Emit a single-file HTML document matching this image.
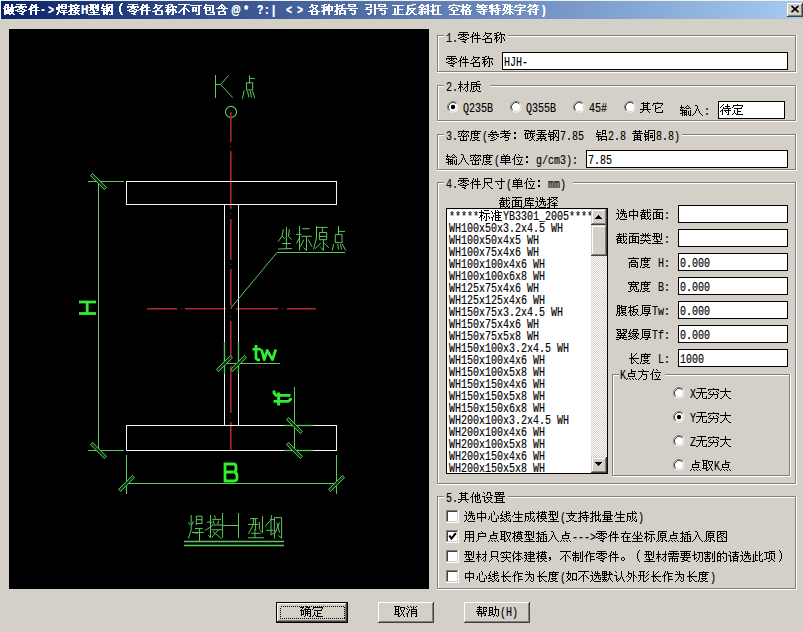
<!DOCTYPE html>
<html><head><meta charset="utf-8"><style>
html,body{margin:0;padding:0;}
body{width:803px;height:632px;overflow:hidden;position:relative;background:#d4d0c8;font-family:"Liberation Sans",sans-serif;font-size:12px;color:#000;}
#tb{position:absolute;left:1px;top:1px;width:802px;height:18px;background:linear-gradient(to right,#0a246a 0%,#a6caf0 100%);}
#topline{position:absolute;left:0;top:0;width:803px;height:1px;background:#eef0f4;}
#leftline{position:absolute;left:0;top:0;width:1px;height:20px;background:#eef0f4;}
.title{position:absolute;top:4px;height:13px;line-height:13px;color:#fff;font-weight:bold;font-size:12px;white-space:nowrap;text-shadow:0.6px 0 0 #fff;}
.ct{display:inline-block;width:12.75px;position:relative;color:transparent;text-shadow:none;}
.ct .g{fill:#fff;}
.ta{display:inline-block;width:7px;transform:scaleX(0.8);transform-origin:0 0;}
#cad{position:absolute;left:9px;top:29px;width:420px;height:560px;background:#000;}
svg{position:absolute;left:0;top:0;}
.t{position:absolute;white-space:nowrap;line-height:12px;height:12px;}
.c{display:inline-block;width:12px;height:12px;line-height:12px;vertical-align:top;position:relative;top:1px;color:transparent;}
.g{position:absolute;left:0;top:-2px;fill:#000;overflow:visible;}
.ct .g{top:-2px;}
.a{display:inline-block;height:12px;line-height:12px;vertical-align:top;overflow:visible;white-space:nowrap;}
.s{display:inline-block;font-family:"Liberation Mono",monospace;font-size:12px;line-height:12px;transform:scaleX(0.8333);transform-origin:0 0;position:relative;top:1px;-webkit-text-stroke:0.15px #000;}
#list{position:absolute;left:447px;top:209px;width:144px;height:264px;overflow:hidden;}
</style></head><body>
<svg width="0" height="0" style="position:absolute;left:0;top:0"><defs><path id="g3002" d="M2 8h2v1h-2zM1 9h1v2h-1zM4 9h1v2h-1zM2 11h2v1h-2z"/><path id="g4e0d" d="M0 2h11v1h-11zM6 3h1v2h-1zM5 5h1v1h-1zM4 6h2v1h-2zM7 6h1v1h-1zM3 7h1v1h-1zM8 7h1v1h-1zM2 8h1v1h-1zM9 8h1v1h-1zM1 9h1v1h-1zM10 9h1v1h-1zM0 10h1v1h-1zM5 7h1v6h-1z"/><path id="g4e2d" d="M5 2h1v2h-1zM1 4h9v1h-9zM1 5h1v3h-1zM5 5h1v3h-1zM9 5h1v3h-1zM1 8h9v1h-9zM1 9h1v1h-1zM9 9h1v1h-1zM5 9h1v4h-1z"/><path id="g4e3a" d="M2 2h1v1h-1zM3 3h1v1h-1zM5 2h1v3h-1zM1 5h9v1h-9zM5 6h1v1h-1zM5 7h2v1h-2zM4 8h1v2h-1zM7 8h1v2h-1zM3 10h1v1h-1zM2 11h1v1h-1zM6 11h1v1h-1zM9 6h1v6h-1zM1 12h1v1h-1zM7 12h2v1h-2z"/><path id="g4ed6" d="M3 2h1v2h-1zM7 2h1v3h-1zM9 4h1v1h-1zM2 4h1v2h-1zM5 4h1v2h-1zM7 5h3v1h-3zM1 6h2v1h-2zM4 6h4v1h-4zM0 7h1v1h-1zM7 7h1v2h-1zM9 6h1v3h-1zM7 9h2v1h-2zM7 10h1v1h-1zM5 7h1v5h-1zM10 10h1v2h-1zM2 7h1v6h-1zM6 12h5v1h-5z"/><path id="g4ef6" d="M3 2h1v2h-1zM5 3h1v2h-1zM7 2h1v3h-1zM2 4h1v2h-1zM4 5h6v1h-6zM1 6h3v1h-3zM0 7h1v1h-1zM7 6h1v2h-1zM4 8h7v1h-7zM2 7h1v6h-1zM7 9h1v4h-1z"/><path id="g4f4d" d="M6 2h1v1h-1zM3 2h1v2h-1zM7 3h1v1h-1zM2 4h1v2h-1zM4 5h7v1h-7zM1 6h2v1h-2zM0 7h1v1h-1zM5 7h1v1h-1zM9 7h1v2h-1zM6 8h1v2h-1zM8 9h1v2h-1zM7 11h1v1h-1zM2 7h1v6h-1zM4 12h7v1h-7z"/><path id="g4f53" d="M2 2h1v2h-1zM6 2h1v2h-1zM3 4h7v1h-7zM1 4h1v2h-1zM6 5h1v1h-1zM0 6h2v1h-2zM5 6h3v1h-3zM4 7h1v1h-1zM8 7h1v1h-1zM1 7h1v2h-1zM3 8h1v1h-1zM9 8h1v1h-1zM1 9h2v1h-2zM6 7h1v3h-1zM10 9h1v1h-1zM4 10h5v1h-5zM1 10h1v3h-1zM6 11h1v2h-1z"/><path id="g4f5c" d="M3 2h1v2h-1zM5 2h1v2h-1zM5 4h6v1h-6zM2 4h1v2h-1zM4 5h1v1h-1zM1 6h3v1h-3zM6 5h1v2h-1zM0 7h1v1h-1zM6 7h4v1h-4zM6 8h1v2h-1zM6 10h5v1h-5zM2 7h1v6h-1zM6 11h1v2h-1z"/><path id="g5165" d="M3 2h2v1h-2zM5 3h1v3h-1zM4 6h1v2h-1zM6 6h1v2h-1zM3 8h1v2h-1zM7 8h1v2h-1zM2 10h1v1h-1zM8 10h1v1h-1zM1 11h1v1h-1zM9 11h1v1h-1zM0 12h1v1h-1zM10 12h1v1h-1z"/><path id="g5176" d="M3 2h1v1h-1zM7 2h1v1h-1zM1 3h9v1h-9zM3 4h1v1h-1zM7 4h1v1h-1zM3 5h5v1h-5zM3 6h1v1h-1zM7 6h1v1h-1zM3 7h5v1h-5zM3 8h1v1h-1zM7 8h1v1h-1zM0 9h11v1h-11zM3 10h1v1h-1zM7 10h1v1h-1zM2 11h1v1h-1zM8 11h1v1h-1zM0 12h2v1h-2zM9 12h1v1h-1z"/><path id="g51c6" d="M6 2h1v1h-1zM0 3h1v1h-1zM4 2h1v2h-1zM7 3h1v1h-1zM4 4h7v1h-7zM1 4h1v2h-1zM3 5h2v1h-2zM4 6h1v1h-1zM7 5h1v2h-1zM4 7h6v1h-6zM2 7h1v2h-1zM4 8h1v1h-1zM7 8h1v1h-1zM0 9h2v1h-2zM4 9h6v1h-6zM4 10h1v2h-1zM7 10h1v2h-1zM1 10h1v3h-1zM4 12h7v1h-7z"/><path id="g5207" d="M5 3h6v1h-6zM2 2h1v3h-1zM2 5h3v1h-3zM0 6h3v1h-3zM2 7h1v2h-1zM4 8h1v1h-1zM7 4h1v5h-1zM2 9h2v1h-2zM2 10h1v1h-1zM6 9h1v2h-1zM5 11h1v1h-1zM10 4h1v8h-1zM4 12h1v1h-1zM8 12h2v1h-2z"/><path id="g5236" d="M1 3h1v1h-1zM3 2h1v2h-1zM1 4h6v1h-6zM0 5h1v1h-1zM3 5h1v1h-1zM0 6h7v1h-7zM3 7h1v1h-1zM1 8h6v1h-6zM8 3h1v7h-1zM6 9h1v2h-1zM1 9h1v3h-1zM5 11h2v1h-2zM10 2h1v10h-1zM3 9h1v4h-1zM8 12h3v1h-3z"/><path id="g5272" d="M3 2h1v1h-1zM0 3h7v1h-7zM0 4h1v1h-1zM3 4h1v1h-1zM6 4h1v1h-1zM1 5h5v1h-5zM3 6h1v1h-1zM1 7h5v1h-5zM3 8h1v1h-1zM0 9h7v1h-7zM8 4h1v6h-1zM1 10h1v2h-1zM5 10h1v2h-1zM10 2h1v10h-1zM1 12h5v1h-5zM8 12h3v1h-3z"/><path id="g52a9" d="M1 3h4v1h-4zM7 2h1v3h-1zM1 4h1v2h-1zM4 4h1v2h-1zM6 5h5v1h-5zM1 6h4v1h-4zM1 7h1v1h-1zM4 7h1v1h-1zM1 8h4v1h-4zM4 9h1v1h-1zM7 6h1v4h-1zM1 9h1v2h-1zM3 10h4v1h-4zM0 11h3v1h-3zM6 11h1v1h-1zM8 11h1v1h-1zM10 6h1v6h-1zM5 12h1v1h-1zM9 12h1v1h-1z"/><path id="g5355" d="M3 2h1v1h-1zM7 2h1v1h-1zM4 3h1v1h-1zM6 3h1v1h-1zM1 4h9v1h-9zM1 5h1v1h-1zM5 5h1v1h-1zM9 5h1v1h-1zM1 6h9v1h-9zM1 7h1v1h-1zM5 7h1v1h-1zM9 7h1v1h-1zM1 8h9v1h-9zM5 9h1v1h-1zM0 10h11v1h-11zM5 11h1v2h-1z"/><path id="g539a" d="M2 2h9v1h-9zM4 4h6v1h-6zM4 5h1v1h-1zM9 5h1v1h-1zM4 6h6v1h-6zM4 7h1v1h-1zM9 7h1v1h-1zM4 8h6v1h-6zM2 3h1v7h-1zM8 9h1v1h-1zM2 10h9v1h-9zM1 11h1v1h-1zM7 11h1v1h-1zM0 12h1v1h-1zM5 12h3v1h-3z"/><path id="g539f" d="M2 2h9v1h-9zM6 3h1v1h-1zM4 4h6v1h-6zM4 5h1v1h-1zM9 5h1v1h-1zM4 6h6v1h-6zM4 7h1v1h-1zM9 7h1v1h-1zM4 8h6v1h-6zM2 3h1v8h-1zM4 10h1v1h-1zM8 10h1v1h-1zM1 11h1v1h-1zM3 11h1v1h-1zM6 9h1v3h-1zM9 11h2v1h-2zM0 12h1v1h-1zM2 12h1v1h-1zM5 12h2v1h-2zM10 12h1v1h-1z"/><path id="g53c2" d="M4 2h1v1h-1zM3 3h1v1h-1zM7 3h1v1h-1zM2 4h7v1h-7zM4 5h1v1h-1zM0 6h11v1h-11zM2 7h1v1h-1zM5 7h1v1h-1zM8 7h1v1h-1zM0 8h2v1h-2zM3 8h2v1h-2zM9 8h2v1h-2zM5 9h2v1h-2zM3 10h2v1h-2zM8 10h1v1h-1zM6 11h2v1h-2zM2 12h4v1h-4z"/><path id="g53d6" d="M0 2h6v1h-6zM6 3h5v1h-5zM1 3h1v2h-1zM4 3h1v2h-1zM1 5h4v1h-4zM6 4h1v2h-1zM10 4h1v2h-1zM1 6h1v1h-1zM4 6h1v1h-1zM1 7h4v1h-4zM7 6h1v2h-1zM9 6h1v2h-1zM4 8h1v1h-1zM1 8h1v2h-1zM4 9h2v1h-2zM8 8h1v2h-1zM0 10h5v1h-5zM7 10h1v1h-1zM4 11h1v1h-1zM6 11h1v1h-1zM9 10h1v2h-1zM4 12h2v1h-2zM10 12h1v1h-1z"/><path id="g53ea" d="M3 2h7v1h-7zM3 3h1v4h-1zM9 3h1v4h-1zM3 7h7v1h-7zM3 8h1v1h-1zM9 8h1v1h-1zM4 9h1v1h-1zM8 9h1v1h-1zM3 10h1v1h-1zM9 10h1v1h-1zM2 11h1v1h-1zM1 12h1v1h-1zM10 11h1v2h-1z"/><path id="g540d" d="M3 2h1v1h-1zM3 3h7v1h-7zM3 4h1v1h-1zM8 4h1v1h-1zM2 5h1v1h-1zM4 5h1v1h-1zM7 5h1v1h-1zM1 6h1v1h-1zM5 6h2v1h-2zM5 7h1v1h-1zM3 8h7v1h-7zM0 9h4v1h-4zM3 10h1v2h-1zM9 9h1v3h-1zM3 12h7v1h-7z"/><path id="g56fe" d="M1 2h10v1h-10zM4 3h1v1h-1zM4 4h5v1h-5zM1 3h1v3h-1zM3 5h2v1h-2zM7 5h1v1h-1zM1 6h2v1h-2zM5 6h2v1h-2zM1 7h1v1h-1zM4 7h1v1h-1zM7 7h1v1h-1zM10 3h1v5h-1zM1 8h3v1h-3zM5 8h1v1h-1zM8 8h3v1h-3zM6 9h1v1h-1zM5 10h1v1h-1zM1 9h1v3h-1zM6 11h1v1h-1zM10 9h1v3h-1zM1 12h10v1h-10z"/><path id="g5728" d="M5 2h1v2h-1zM1 4h10v1h-10zM4 5h1v1h-1zM3 6h1v1h-1zM2 7h2v1h-2zM7 6h1v2h-1zM1 8h1v1h-1zM5 8h5v1h-5zM3 8h1v4h-1zM7 9h1v3h-1zM3 12h8v1h-8z"/><path id="g5750" d="M2 3h1v3h-1zM8 3h1v3h-1zM1 6h1v1h-1zM3 6h1v1h-1zM5 2h1v5h-1zM7 6h1v1h-1zM9 6h1v1h-1zM0 7h1v1h-1zM4 7h3v1h-3zM10 7h1v1h-1zM5 8h1v1h-1zM1 9h9v1h-9zM5 10h1v2h-1zM0 12h11v1h-11z"/><path id="g578b" d="M1 2h6v1h-6zM2 3h1v2h-1zM4 3h1v2h-1zM7 3h1v2h-1zM0 5h8v1h-8zM7 6h1v1h-1zM2 6h1v2h-1zM4 6h1v2h-1zM9 2h1v6h-1zM1 8h1v1h-1zM4 8h2v1h-2zM8 8h2v1h-2zM5 9h1v1h-1zM2 10h7v1h-7zM5 11h1v1h-1zM0 12h11v1h-11z"/><path id="g5916" d="M2 2h1v2h-1zM2 4h4v1h-4zM2 5h1v1h-1zM7 2h1v4h-1zM1 6h1v1h-1zM7 6h2v1h-2zM0 7h1v1h-1zM2 7h1v1h-1zM5 5h1v3h-1zM9 7h1v1h-1zM3 8h2v1h-2zM10 8h1v1h-1zM4 9h1v1h-1zM3 10h1v1h-1zM2 11h1v1h-1zM1 12h1v1h-1zM7 7h1v6h-1z"/><path id="g5927" d="M5 2h1v3h-1zM0 5h11v1h-11zM5 6h1v2h-1zM4 8h1v2h-1zM6 8h1v2h-1zM3 10h1v1h-1zM7 10h1v1h-1zM2 11h1v1h-1zM8 11h1v1h-1zM0 12h2v1h-2zM9 12h2v1h-2z"/><path id="g5982" d="M2 2h1v2h-1zM0 4h5v1h-5zM6 4h5v1h-5zM2 5h1v2h-1zM1 7h1v2h-1zM4 5h1v4h-1zM6 5h1v5h-1zM10 5h1v5h-1zM2 9h2v2h-2zM6 10h5v1h-5zM1 11h1v1h-1zM4 11h1v1h-1zM6 11h1v1h-1zM10 11h1v1h-1zM0 12h1v1h-1z"/><path id="g5b83" d="M5 2h1v1h-1zM1 3h10v1h-10zM1 4h1v1h-1zM10 4h1v1h-1zM0 5h1v1h-1zM9 5h1v1h-1zM3 5h1v3h-1zM6 7h3v1h-3zM3 8h3v1h-3zM3 9h1v3h-1zM10 10h1v2h-1zM4 12h7v1h-7z"/><path id="g5b9a" d="M5 2h1v1h-1zM1 3h10v1h-10zM1 4h1v1h-1zM10 4h1v1h-1zM0 5h1v1h-1zM9 5h1v1h-1zM2 6h8v1h-8zM5 7h1v2h-1zM5 9h4v1h-4zM2 8h1v3h-1zM1 11h1v1h-1zM3 11h1v1h-1zM5 10h1v2h-1zM0 12h1v1h-1zM4 12h7v1h-7z"/><path id="g5b9e" d="M6 2h1v1h-1zM1 3h10v1h-10zM1 4h1v1h-1zM3 4h1v1h-1zM10 4h1v1h-1zM0 5h1v1h-1zM4 5h1v1h-1zM9 5h1v1h-1zM2 6h1v1h-1zM3 7h1v1h-1zM6 5h1v3h-1zM1 8h10v1h-10zM6 9h1v1h-1zM5 10h1v1h-1zM7 10h1v1h-1zM4 11h1v1h-1zM8 11h1v1h-1zM1 12h3v1h-3zM9 12h2v1h-2z"/><path id="g5bbd" d="M5 2h1v1h-1zM0 3h11v1h-11zM0 4h1v1h-1zM3 4h1v1h-1zM7 4h1v1h-1zM10 4h1v1h-1zM1 5h9v1h-9zM3 6h1v1h-1zM7 6h1v1h-1zM2 7h7v1h-7zM5 8h1v2h-1zM2 8h1v3h-1zM4 10h1v1h-1zM8 8h1v3h-1zM3 11h1v1h-1zM6 10h1v2h-1zM10 10h1v2h-1zM0 12h3v1h-3zM7 12h4v1h-4z"/><path id="g5bc6" d="M5 2h1v1h-1zM0 3h11v1h-11zM0 4h1v1h-1zM4 4h1v1h-1zM8 4h1v1h-1zM10 4h1v1h-1zM1 5h1v1h-1zM5 5h1v1h-1zM7 5h1v1h-1zM0 6h1v1h-1zM6 6h1v1h-1zM9 6h1v1h-1zM3 5h1v3h-1zM5 7h1v1h-1zM8 7h1v1h-1zM0 8h3v1h-3zM4 8h5v1h-5zM10 7h1v2h-1zM2 10h1v2h-1zM5 9h1v3h-1zM8 10h1v2h-1zM2 12h7v1h-7z"/><path id="g5bf8" d="M7 2h1v3h-1zM1 5h10v1h-10zM3 7h1v1h-1zM4 8h1v1h-1zM7 6h1v6h-1zM5 12h3v1h-3z"/><path id="g5c3a" d="M2 2h8v1h-8zM2 3h1v3h-1zM9 3h1v3h-1zM2 6h8v1h-8zM5 7h1v2h-1zM6 9h1v1h-1zM2 7h1v4h-1zM7 10h1v1h-1zM1 11h1v1h-1zM8 11h1v1h-1zM0 12h1v1h-1zM9 12h2v1h-2z"/><path id="g5e2e" d="M3 2h1v1h-1zM1 3h5v1h-5zM7 3h4v1h-4zM3 4h1v1h-1zM10 4h1v1h-1zM1 5h5v1h-5zM9 5h1v1h-1zM3 6h1v1h-1zM7 4h1v3h-1zM10 6h1v1h-1zM0 7h6v1h-6zM7 7h4v1h-4zM2 8h1v1h-1zM5 8h1v1h-1zM7 8h1v1h-1zM1 9h9v1h-9zM9 10h1v1h-1zM2 10h1v2h-1zM8 11h2v1h-2zM5 10h1v3h-1z"/><path id="g5e93" d="M6 2h1v1h-1zM2 3h9v1h-9zM2 4h1v1h-1zM6 4h1v1h-1zM2 5h9v1h-9zM5 6h1v1h-1zM4 7h1v1h-1zM7 7h1v1h-1zM4 8h6v1h-6zM2 6h1v4h-1zM7 9h1v1h-1zM2 10h9v1h-9zM1 11h1v1h-1zM0 12h1v1h-1zM7 11h1v2h-1z"/><path id="g5ea6" d="M5 2h1v1h-1zM1 3h10v1h-10zM1 4h1v1h-1zM4 4h1v1h-1zM7 4h1v1h-1zM1 5h9v1h-9zM4 6h1v1h-1zM7 6h1v1h-1zM4 7h4v1h-4zM3 9h6v1h-6zM1 6h1v5h-1zM4 10h1v1h-1zM7 10h1v1h-1zM5 11h2v1h-2zM0 11h1v2h-1zM2 12h3v1h-3zM7 12h3v1h-3z"/><path id="g5efa" d="M6 2h1v1h-1zM0 3h3v1h-3zM4 3h6v1h-6zM2 4h1v1h-1zM6 4h1v1h-1zM9 4h1v1h-1zM1 5h1v1h-1zM3 5h8v1h-8zM0 6h3v1h-3zM6 6h1v1h-1zM9 6h1v1h-1zM4 7h6v1h-6zM0 8h1v1h-1zM2 7h1v2h-1zM6 8h1v1h-1zM1 9h2v1h-2zM4 9h7v1h-7zM2 10h1v1h-1zM1 11h1v1h-1zM3 11h1v1h-1zM6 10h1v2h-1zM0 12h1v1h-1zM4 12h7v1h-7z"/><path id="g5f62" d="M1 2h6v1h-6zM10 2h1v1h-1zM9 3h1v1h-1zM8 4h1v1h-1zM2 3h1v3h-1zM5 3h1v3h-1zM10 5h1v1h-1zM0 6h7v1h-7zM9 6h1v1h-1zM8 7h1v1h-1zM7 8h1v1h-1zM10 9h1v1h-1zM2 7h1v4h-1zM9 10h1v1h-1zM1 11h1v1h-1zM5 7h1v5h-1zM8 11h1v1h-1zM0 12h1v1h-1zM5 12h3v1h-3z"/><path id="g5f85" d="M3 2h1v1h-1zM2 3h1v1h-1zM7 2h1v2h-1zM1 4h1v1h-1zM5 4h5v1h-5zM0 5h1v1h-1zM3 5h1v1h-1zM7 5h1v1h-1zM3 6h8v1h-8zM2 7h1v1h-1zM8 7h1v1h-1zM1 8h2v1h-2zM4 8h7v1h-7zM0 9h1v1h-1zM5 9h1v1h-1zM6 10h1v1h-1zM8 9h1v3h-1zM2 9h1v4h-1zM7 12h2v1h-2z"/><path id="g5fc3" d="M5 2h1v1h-1zM6 3h1v3h-1zM9 6h1v1h-1zM1 7h1v3h-1zM10 7h1v3h-1zM0 10h1v1h-1zM3 4h1v8h-1zM8 9h1v3h-1zM4 12h5v1h-5z"/><path id="g6210" d="M8 2h1v1h-1zM6 2h1v2h-1zM9 3h1v1h-1zM1 4h10v1h-10zM1 5h1v2h-1zM1 7h4v1h-4zM9 7h1v2h-1zM6 5h1v5h-1zM8 9h1v1h-1zM4 8h1v3h-1zM7 10h1v1h-1zM1 8h1v4h-1zM3 11h1v1h-1zM6 11h1v1h-1zM8 11h1v1h-1zM10 10h1v2h-1zM0 12h1v1h-1zM5 12h1v1h-1zM9 12h2v1h-2z"/><path id="g622a" d="M3 2h1v1h-1zM9 2h1v1h-1zM1 3h5v1h-5zM10 3h1v1h-1zM3 4h1v1h-1zM7 2h1v3h-1zM0 5h11v1h-11zM2 6h1v1h-1zM4 6h1v1h-1zM1 7h5v1h-5zM0 8h2v1h-2zM4 8h1v1h-1zM10 7h1v2h-1zM1 9h5v1h-5zM7 6h1v4h-1zM9 9h1v1h-1zM1 10h1v1h-1zM4 10h1v1h-1zM8 10h1v1h-1zM1 11h5v1h-5zM7 11h2v1h-2zM10 11h1v1h-1zM1 12h1v1h-1zM6 12h1v1h-1zM9 12h2v1h-2z"/><path id="g6237" d="M5 2h1v1h-1zM6 3h1v1h-1zM2 4h8v1h-8zM2 5h1v2h-1zM9 5h1v2h-1zM2 7h8v1h-8zM2 8h1v3h-1zM1 11h1v1h-1zM0 12h1v1h-1z"/><path id="g6279" d="M2 2h1v2h-1zM5 2h1v2h-1zM0 4h6v1h-6zM5 5h1v1h-1zM8 2h1v4h-1zM10 5h1v1h-1zM2 5h1v2h-1zM4 6h6v1h-6zM2 7h2v1h-2zM1 8h2v1h-2zM0 9h1v1h-1zM8 7h1v3h-1zM5 7h1v4h-1zM7 10h2v1h-2zM2 9h1v3h-1zM5 11h2v1h-2zM8 11h1v1h-1zM10 10h1v2h-1zM0 12h3v1h-3zM5 12h1v1h-1zM9 12h2v1h-2z"/><path id="g62e9" d="M4 2h7v1h-7zM2 2h1v2h-1zM6 3h1v1h-1zM9 3h1v1h-1zM0 4h5v1h-5zM7 4h2v1h-2zM6 5h1v1h-1zM9 5h1v1h-1zM2 5h1v2h-1zM4 6h2v1h-2zM10 6h1v1h-1zM2 7h2v1h-2zM7 7h1v1h-1zM1 8h2v1h-2zM5 8h5v1h-5zM0 9h1v1h-1zM7 9h1v1h-1zM4 10h7v1h-7zM2 9h1v3h-1zM0 12h3v1h-3zM7 11h1v2h-1z"/><path id="g6301" d="M7 2h1v1h-1zM2 2h1v2h-1zM5 3h5v1h-5zM0 4h5v1h-5zM7 4h1v2h-1zM2 5h1v2h-1zM4 6h7v1h-7zM2 7h2v1h-2zM8 7h1v1h-1zM1 8h2v1h-2zM4 8h7v1h-7zM0 9h1v1h-1zM5 9h1v1h-1zM6 10h1v1h-1zM2 9h1v3h-1zM8 9h1v3h-1zM0 12h3v1h-3zM7 12h2v1h-2z"/><path id="g63d2" d="M8 2h2v1h-2zM2 2h1v2h-1zM5 3h3v1h-3zM0 4h4v1h-4zM7 4h1v1h-1zM4 5h7v1h-7zM2 5h1v2h-1zM2 7h2v1h-2zM5 7h1v1h-1zM9 7h2v1h-2zM1 8h2v1h-2zM4 8h1v1h-1zM10 8h1v1h-1zM0 9h1v1h-1zM4 9h2v1h-2zM9 9h2v1h-2zM2 9h1v3h-1zM4 10h1v2h-1zM7 6h1v6h-1zM10 10h1v2h-1zM0 12h3v1h-3zM4 12h7v1h-7z"/><path id="g652f" d="M5 2h1v2h-1zM0 4h11v1h-11zM5 5h1v1h-1zM2 6h7v1h-7zM3 7h1v2h-1zM7 7h1v2h-1zM4 9h1v1h-1zM6 9h1v1h-1zM5 10h1v1h-1zM3 11h2v1h-2zM6 11h2v1h-2zM0 12h3v1h-3zM8 12h3v1h-3z"/><path id="g65b9" d="M4 2h1v1h-1zM5 3h1v1h-1zM0 4h11v1h-11zM4 5h1v2h-1zM4 7h5v1h-5zM3 8h1v2h-1zM2 10h1v1h-1zM1 11h1v1h-1zM8 8h1v4h-1zM0 12h1v1h-1zM5 12h3v1h-3z"/><path id="g65e0" d="M1 2h9v1h-9zM5 3h1v3h-1zM0 6h11v1h-11zM4 7h1v2h-1zM3 9h1v2h-1zM2 11h1v1h-1zM6 7h1v5h-1zM10 10h1v2h-1zM0 12h2v1h-2zM7 12h4v1h-4z"/><path id="g6750" d="M2 2h1v3h-1zM9 2h1v3h-1zM0 5h5v1h-5zM6 5h5v1h-5zM2 6h1v1h-1zM9 6h1v1h-1zM1 7h3v1h-3zM8 7h2v1h-2zM1 8h2v1h-2zM4 8h1v1h-1zM7 8h1v1h-1zM0 9h1v1h-1zM6 9h1v1h-1zM5 10h1v1h-1zM7 11h1v1h-1zM9 8h1v4h-1zM2 9h1v4h-1zM8 12h1v1h-1z"/><path id="g677f" d="M8 2h2v1h-2zM2 2h1v2h-1zM5 3h3v1h-3zM0 4h6v1h-6zM5 5h1v1h-1zM2 5h1v2h-1zM5 6h5v1h-5zM1 7h3v1h-3zM5 7h1v1h-1zM1 8h2v1h-2zM4 8h3v1h-3zM9 7h1v2h-1zM0 9h1v1h-1zM5 9h1v1h-1zM7 9h2v1h-2zM8 10h1v1h-1zM2 9h1v3h-1zM4 10h1v2h-1zM7 11h1v1h-1zM9 11h1v1h-1zM2 12h2v1h-2zM5 12h2v1h-2zM10 12h1v1h-1z"/><path id="g6807" d="M5 2h5v1h-5zM2 2h1v2h-1zM0 4h5v1h-5zM4 5h7v1h-7zM2 5h1v2h-1zM1 7h3v1h-3zM1 8h2v1h-2zM9 8h1v1h-1zM0 9h1v1h-1zM5 8h1v2h-1zM4 10h1v1h-1zM10 9h1v2h-1zM7 6h1v6h-1zM2 9h1v4h-1zM6 12h2v1h-2z"/><path id="g6a21" d="M6 2h1v1h-1zM8 2h1v1h-1zM2 2h1v2h-1zM4 3h7v1h-7zM0 4h4v1h-4zM6 4h1v1h-1zM8 4h1v1h-1zM2 5h1v1h-1zM5 5h5v1h-5zM2 6h2v1h-2zM5 6h1v1h-1zM9 6h1v1h-1zM4 7h6v1h-6zM1 7h2v2h-2zM5 8h1v1h-1zM9 8h1v1h-1zM0 9h1v1h-1zM4 9h7v1h-7zM7 10h1v1h-1zM6 11h1v1h-1zM8 11h1v1h-1zM2 9h1v4h-1zM4 12h2v1h-2zM9 12h2v1h-2z"/><path id="g6b64" d="M10 4h1v1h-1zM3 2h1v4h-1zM7 2h1v4h-1zM9 5h1v1h-1zM3 6h3v1h-3zM7 6h2v1h-2zM3 7h1v4h-1zM1 5h1v7h-1zM3 11h3v1h-3zM7 7h1v5h-1zM10 10h1v2h-1zM0 12h3v1h-3zM8 12h3v1h-3z"/><path id="g6d88" d="M1 2h1v1h-1zM4 2h1v1h-1zM10 2h1v1h-1zM2 3h1v1h-1zM5 3h1v1h-1zM9 3h1v1h-1zM0 4h1v1h-1zM7 2h1v3h-1zM1 5h1v1h-1zM5 5h6v1h-6zM3 5h1v2h-1zM5 6h1v1h-1zM10 6h1v1h-1zM5 7h6v1h-6zM2 7h1v2h-1zM5 8h1v1h-1zM10 8h1v1h-1zM0 9h2v1h-2zM5 9h6v1h-6zM10 10h1v2h-1zM1 10h1v3h-1zM5 10h1v3h-1zM9 12h2v1h-2z"/><path id="g70b9" d="M5 2h1v2h-1zM5 4h5v1h-5zM5 5h1v1h-1zM2 6h7v1h-7zM2 7h1v2h-1zM8 7h1v2h-1zM2 9h7v1h-7zM1 11h1v1h-1zM3 11h1v1h-1zM6 11h1v1h-1zM9 11h1v1h-1zM0 12h1v1h-1zM4 12h1v1h-1zM7 12h1v1h-1zM10 12h1v1h-1z"/><path id="g751f" d="M2 3h1v2h-1zM6 2h1v3h-1zM2 5h9v1h-9zM1 6h1v1h-1zM0 7h1v1h-1zM6 6h1v2h-1zM3 8h7v1h-7zM6 9h1v3h-1zM1 12h10v1h-10z"/><path id="g7528" d="M1 2h9v1h-9zM1 3h1v2h-1zM5 3h1v2h-1zM9 3h1v2h-1zM1 5h9v1h-9zM1 6h1v2h-1zM5 6h1v2h-1zM9 6h1v2h-1zM1 8h9v1h-9zM1 9h1v2h-1zM9 9h1v3h-1zM0 11h1v2h-1zM5 9h1v4h-1zM8 12h2v1h-2z"/><path id="g7684" d="M3 2h1v1h-1zM2 3h1v1h-1zM7 2h1v2h-1zM1 4h4v1h-4zM6 4h5v1h-5zM4 5h2v1h-2zM1 5h1v2h-1zM4 6h1v1h-1zM1 7h4v1h-4zM6 7h1v1h-1zM7 8h1v2h-1zM1 8h1v3h-1zM4 8h1v3h-1zM1 11h4v1h-4zM10 5h1v7h-1zM1 12h1v1h-1zM4 12h1v1h-1zM8 12h2v1h-2z"/><path id="g786e" d="M6 2h1v1h-1zM0 3h4v1h-4zM6 3h4v1h-4zM2 4h1v1h-1zM5 4h1v1h-1zM8 4h1v1h-1zM1 5h1v1h-1zM4 5h7v1h-7zM0 6h4v1h-4zM5 6h1v1h-1zM7 6h1v1h-1zM10 6h1v1h-1zM5 7h6v1h-6zM5 8h1v1h-1zM7 8h1v1h-1zM10 8h1v1h-1zM1 7h1v3h-1zM3 7h1v3h-1zM5 9h6v1h-6zM1 10h3v1h-3zM1 11h1v1h-1zM5 10h1v2h-1zM7 10h1v2h-1zM10 10h1v2h-1zM4 12h1v1h-1zM9 12h2v1h-2z"/><path id="g78b3" d="M0 2h5v1h-5zM7 2h1v1h-1zM10 2h1v1h-1zM2 3h1v1h-1zM4 3h7v1h-7zM1 4h1v1h-1zM6 4h1v1h-1zM1 5h10v1h-10zM0 6h2v1h-2zM8 6h1v2h-1zM10 7h1v1h-1zM6 6h1v3h-1zM8 8h2v1h-2zM1 7h1v3h-1zM3 6h1v4h-1zM5 9h1v1h-1zM7 9h2v1h-2zM1 10h4v1h-4zM8 10h1v1h-1zM7 11h1v1h-1zM9 11h1v1h-1zM5 12h2v1h-2zM10 12h1v1h-1z"/><path id="g79f0" d="M3 2h2v1h-2zM0 3h3v1h-3zM6 2h1v2h-1zM2 4h1v1h-1zM5 4h6v1h-6zM0 5h5v1h-5zM10 5h1v1h-1zM2 6h1v1h-1zM1 7h3v1h-3zM1 8h2v1h-2zM5 7h1v2h-1zM9 7h1v2h-1zM0 9h1v1h-1zM2 9h1v1h-1zM4 9h1v1h-1zM2 10h2v1h-2zM10 9h1v2h-1zM7 5h1v7h-1zM2 11h1v2h-1zM6 12h2v1h-2z"/><path id="g7a77" d="M5 2h1v1h-1zM0 3h11v1h-11zM0 4h1v1h-1zM10 4h1v1h-1zM2 5h1v1h-1zM8 5h1v1h-1zM1 6h1v1h-1zM9 6h1v1h-1zM0 7h1v1h-1zM5 6h1v2h-1zM10 7h1v1h-1zM1 8h9v1h-9zM4 9h1v1h-1zM3 10h1v1h-1zM2 11h1v1h-1zM9 9h1v3h-1zM0 12h2v1h-2zM7 12h2v1h-2z"/><path id="g7c7b" d="M2 2h1v1h-1zM8 2h1v1h-1zM3 3h1v1h-1zM5 2h1v2h-1zM7 3h1v1h-1zM0 4h11v1h-11zM3 5h1v1h-1zM7 5h1v1h-1zM2 6h1v1h-1zM5 5h1v2h-1zM8 6h1v1h-1zM1 7h1v1h-1zM9 7h1v1h-1zM5 8h1v1h-1zM0 9h11v1h-11zM4 10h1v1h-1zM6 10h1v1h-1zM3 11h1v1h-1zM7 11h1v1h-1zM0 12h3v1h-3zM8 12h3v1h-3z"/><path id="g7d20" d="M1 2h9v1h-9zM5 3h1v1h-1zM2 4h7v1h-7zM5 5h1v1h-1zM0 6h11v1h-11zM4 7h1v1h-1zM7 7h1v1h-1zM2 8h7v1h-7zM4 9h1v1h-1zM9 9h1v1h-1zM1 10h9v1h-9zM2 11h1v1h-1zM5 11h1v1h-1zM8 11h1v1h-1zM0 12h2v1h-2zM4 12h2v1h-2zM9 12h2v1h-2z"/><path id="g7ebf" d="M8 2h1v1h-1zM2 2h1v2h-1zM6 2h1v2h-1zM9 3h1v1h-1zM6 4h4v1h-4zM1 4h1v2h-1zM4 5h3v1h-3zM0 6h3v1h-3zM6 6h5v1h-5zM2 7h1v1h-1zM4 7h3v1h-3zM1 8h1v1h-1zM9 8h1v1h-1zM0 9h4v1h-4zM6 8h1v2h-1zM8 9h1v1h-1zM4 10h1v1h-1zM7 10h1v1h-1zM2 11h2v1h-2zM6 11h1v1h-1zM8 11h1v1h-1zM10 10h1v2h-1zM0 12h2v1h-2zM4 12h2v1h-2zM9 12h2v1h-2z"/><path id="g7f18" d="M5 2h5v1h-5zM2 2h1v2h-1zM5 3h1v1h-1zM9 3h1v1h-1zM4 4h5v1h-5zM1 4h1v2h-1zM3 5h1v1h-1zM8 5h1v1h-1zM0 6h3v1h-3zM4 6h7v1h-7zM2 7h1v1h-1zM5 7h1v1h-1zM7 7h1v1h-1zM10 7h1v1h-1zM1 8h1v1h-1zM4 8h1v1h-1zM6 8h2v1h-2zM9 8h1v1h-1zM0 9h4v1h-4zM5 9h1v1h-1zM7 9h2v1h-2zM4 10h1v1h-1zM6 10h1v1h-1zM8 10h2v1h-2zM2 11h2v1h-2zM5 11h1v1h-1zM8 11h1v1h-1zM10 11h1v1h-1zM0 12h2v1h-2zM6 12h2v1h-2z"/><path id="g7f6e" d="M1 2h9v1h-9zM1 3h1v1h-1zM4 3h1v1h-1zM6 3h1v1h-1zM9 3h1v1h-1zM1 4h9v1h-9zM5 5h1v1h-1zM0 6h11v1h-11zM2 7h1v1h-1zM8 7h1v1h-1zM2 8h7v1h-7zM2 9h1v1h-1zM8 9h1v1h-1zM2 10h7v1h-7zM2 11h1v1h-1zM8 11h1v1h-1zM0 12h11v1h-11z"/><path id="g7ffc" d="M0 2h5v1h-5zM6 2h5v1h-5zM1 3h1v1h-1zM4 3h1v1h-1zM7 3h1v1h-1zM10 3h1v1h-1zM2 4h3v1h-3zM8 4h3v1h-3zM1 5h1v1h-1zM4 5h1v1h-1zM7 5h1v1h-1zM10 5h1v1h-1zM1 6h9v1h-9zM2 7h1v1h-1zM5 7h1v1h-1zM8 7h1v1h-1zM1 8h9v1h-9zM4 9h1v1h-1zM7 9h1v1h-1zM0 10h11v1h-11zM3 11h2v1h-2zM6 11h2v1h-2zM0 12h3v1h-3zM8 12h3v1h-3z"/><path id="g8003" d="M4 2h1v1h-1zM9 2h1v1h-1zM1 3h8v1h-8zM4 4h1v1h-1zM7 4h1v1h-1zM0 5h11v1h-11zM5 6h1v1h-1zM4 7h6v1h-6zM2 8h2v1h-2zM5 8h1v1h-1zM0 9h2v1h-2zM4 9h5v1h-5zM8 10h1v2h-1zM5 12h3v1h-3z"/><path id="g8179" d="M1 2h3v1h-3zM5 2h1v1h-1zM3 3h1v1h-1zM5 3h6v1h-6zM1 3h1v2h-1zM3 4h3v1h-3zM9 4h1v1h-1zM1 5h3v1h-3zM5 5h5v1h-5zM5 6h1v1h-1zM9 6h1v1h-1zM1 6h1v2h-1zM3 6h1v2h-1zM5 7h5v1h-5zM1 8h3v1h-3zM6 8h1v1h-1zM3 9h1v1h-1zM5 9h5v1h-5zM1 9h1v2h-1zM3 10h2v1h-2zM6 10h1v1h-1zM9 10h1v1h-1zM3 11h1v1h-1zM7 11h2v1h-2zM0 11h1v2h-1zM2 12h2v1h-2zM5 12h2v1h-2zM9 12h2v1h-2z"/><path id="g8981" d="M0 2h11v1h-11zM4 3h1v1h-1zM6 3h1v1h-1zM1 4h9v1h-9zM1 5h1v1h-1zM4 5h1v1h-1zM6 5h1v1h-1zM9 5h1v1h-1zM1 6h9v1h-9zM4 7h1v1h-1zM0 8h11v1h-11zM3 9h1v1h-1zM7 9h1v1h-1zM2 10h3v1h-3zM6 10h1v1h-1zM4 11h4v1h-4zM1 12h3v1h-3zM8 12h2v1h-2z"/><path id="g8ba4" d="M1 2h1v1h-1zM2 3h1v1h-1zM0 6h3v1h-3zM7 2h1v6h-1zM2 7h1v3h-1zM4 9h1v1h-1zM6 8h1v2h-1zM8 8h1v2h-1zM2 10h2v1h-2zM5 10h1v1h-1zM2 11h1v1h-1zM4 11h1v1h-1zM9 10h1v2h-1zM3 12h1v1h-1zM10 12h1v1h-1z"/><path id="g8bbe" d="M1 2h1v1h-1zM5 2h4v1h-4zM2 3h1v1h-1zM5 3h1v2h-1zM8 3h1v2h-1zM4 5h1v1h-1zM8 5h3v1h-3zM0 6h3v1h-3zM4 7h6v1h-6zM5 8h1v1h-1zM9 8h1v1h-1zM2 7h1v3h-1zM6 9h1v1h-1zM8 9h1v1h-1zM2 10h2v1h-2zM7 10h1v1h-1zM2 11h1v1h-1zM6 11h1v1h-1zM8 11h1v1h-1zM3 12h3v1h-3zM9 12h2v1h-2z"/><path id="g8bf7" d="M1 2h1v1h-1zM7 2h1v1h-1zM4 3h7v1h-7zM2 3h1v2h-1zM7 4h1v1h-1zM5 5h5v1h-5zM0 6h3v1h-3zM7 6h1v1h-1zM4 7h7v1h-7zM5 8h1v1h-1zM9 8h1v1h-1zM5 9h5v1h-5zM2 7h1v4h-1zM5 10h1v1h-1zM9 10h1v1h-1zM2 11h2v1h-2zM5 11h5v1h-5zM2 12h1v1h-1zM5 12h1v1h-1zM9 12h1v1h-1z"/><path id="g8d28" d="M7 2h3v1h-3zM1 3h6v1h-6zM1 4h1v1h-1zM6 4h1v1h-1zM1 5h10v1h-10zM6 6h1v1h-1zM3 7h7v1h-7zM1 6h1v5h-1zM3 8h1v3h-1zM6 9h1v2h-1zM9 8h1v3h-1zM5 11h1v1h-1zM7 11h1v1h-1zM0 11h1v2h-1zM2 12h3v1h-3zM8 12h3v1h-3z"/><path id="g8f93" d="M7 2h1v1h-1zM1 2h1v2h-1zM6 3h1v1h-1zM8 3h1v1h-1zM0 4h4v1h-4zM5 4h1v1h-1zM9 4h1v1h-1zM1 5h1v1h-1zM4 5h1v1h-1zM6 5h3v1h-3zM10 5h1v1h-1zM0 6h1v1h-1zM2 6h1v1h-1zM0 7h7v1h-7zM2 8h1v1h-1zM4 8h1v1h-1zM6 8h1v1h-1zM2 9h5v1h-5zM0 10h3v1h-3zM4 10h1v1h-1zM6 10h1v1h-1zM4 11h3v1h-3zM8 8h1v4h-1zM10 7h1v5h-1zM2 11h1v2h-1zM4 12h1v1h-1zM6 12h1v1h-1zM9 12h2v1h-2z"/><path id="g9009" d="M1 2h1v1h-1zM5 2h1v2h-1zM7 2h1v2h-1zM2 3h1v2h-1zM5 4h5v1h-5zM4 5h1v1h-1zM7 5h1v1h-1zM0 6h3v1h-3zM4 6h7v1h-7zM6 7h1v2h-1zM5 9h1v1h-1zM8 7h1v3h-1zM10 8h1v2h-1zM2 7h1v4h-1zM4 10h1v1h-1zM9 10h2v1h-2zM1 11h1v1h-1zM3 11h1v1h-1zM0 12h1v1h-1zM4 12h7v1h-7z"/><path id="g91cf" d="M2 2h7v1h-7zM2 3h1v1h-1zM8 3h1v1h-1zM2 4h7v1h-7zM2 5h1v1h-1zM8 5h1v1h-1zM0 6h11v1h-11zM2 7h1v1h-1zM5 7h1v1h-1zM8 7h1v1h-1zM2 8h7v1h-7zM2 9h1v1h-1zM5 9h1v1h-1zM8 9h1v1h-1zM1 10h9v1h-9zM5 11h1v1h-1zM0 12h11v1h-11z"/><path id="g94a2" d="M5 2h6v1h-6zM1 2h1v2h-1zM5 3h1v1h-1zM1 4h5v1h-5zM0 5h1v1h-1zM5 5h2v1h-2zM8 4h1v2h-1zM0 6h6v1h-6zM2 7h1v1h-1zM5 7h1v1h-1zM7 6h1v2h-1zM0 8h6v1h-6zM7 8h2v1h-2zM10 3h1v6h-1zM5 9h2v1h-2zM9 9h2v1h-2zM2 9h1v2h-1zM4 10h2v1h-2zM2 11h2v1h-2zM10 10h1v2h-1zM2 12h1v1h-1zM5 11h1v2h-1zM8 12h3v1h-3z"/><path id="g94dc" d="M4 2h7v1h-7zM1 2h1v2h-1zM4 3h1v1h-1zM1 4h4v1h-4zM0 5h1v1h-1zM4 5h1v1h-1zM6 5h3v1h-3zM0 6h5v1h-5zM1 7h1v1h-1zM4 7h1v1h-1zM6 7h3v1h-3zM0 8h5v1h-5zM6 8h1v1h-1zM8 8h1v1h-1zM4 9h1v1h-1zM6 9h3v1h-3zM1 9h1v2h-1zM3 10h2v1h-2zM1 11h2v1h-2zM10 3h1v9h-1zM1 12h1v1h-1zM4 11h1v2h-1zM8 12h3v1h-3z"/><path id="g94dd" d="M6 2h4v1h-4zM1 2h1v2h-1zM1 4h4v1h-4zM6 3h1v2h-1zM9 3h1v2h-1zM0 5h1v1h-1zM6 5h4v1h-4zM0 6h5v1h-5zM6 6h1v1h-1zM9 6h1v1h-1zM2 7h1v1h-1zM0 8h11v1h-11zM5 9h1v1h-1zM2 9h1v2h-1zM4 10h2v1h-2zM10 9h1v2h-1zM2 11h2v1h-2zM5 11h6v1h-6zM2 12h1v1h-1zM5 12h1v1h-1zM10 12h1v1h-1z"/><path id="g957f" d="M8 2h1v1h-1zM7 3h1v1h-1zM6 4h1v1h-1zM3 2h1v4h-1zM5 5h1v1h-1zM3 6h2v1h-2zM1 7h10v1h-10zM5 8h1v1h-1zM6 9h1v1h-1zM7 10h1v1h-1zM3 8h1v4h-1zM5 11h1v1h-1zM8 11h1v1h-1zM3 12h2v1h-2zM9 12h2v1h-2z"/><path id="g96f6" d="M1 2h9v1h-9zM5 3h1v1h-1zM0 4h11v1h-11zM0 5h1v1h-1zM3 5h1v1h-1zM5 5h1v1h-1zM7 5h1v1h-1zM10 5h1v1h-1zM4 6h3v1h-3zM2 7h2v1h-2zM7 7h2v1h-2zM0 8h2v1h-2zM5 8h1v1h-1zM9 8h2v1h-2zM2 9h7v1h-7zM7 10h1v1h-1zM4 11h3v1h-3zM6 12h2v1h-2z"/><path id="g9700" d="M1 2h9v1h-9zM5 3h1v1h-1zM0 4h11v1h-11zM0 5h1v1h-1zM2 5h2v1h-2zM7 5h2v1h-2zM10 5h1v1h-1zM5 5h1v2h-1zM0 7h11v1h-11zM4 8h1v1h-1zM1 9h9v1h-9zM9 10h1v2h-1zM1 10h1v3h-1zM4 10h1v3h-1zM6 10h1v3h-1zM8 12h2v1h-2z"/><path id="g9762" d="M1 2h10v1h-10zM5 3h1v1h-1zM4 4h1v1h-1zM1 5h10v1h-10zM4 6h1v1h-1zM7 6h1v1h-1zM4 7h4v1h-4zM4 8h1v1h-1zM7 8h1v1h-1zM4 9h4v1h-4zM1 6h1v5h-1zM4 10h1v1h-1zM7 10h1v1h-1zM10 6h1v5h-1zM1 11h10v1h-10zM1 12h1v1h-1zM10 12h1v1h-1z"/><path id="g9879" d="M5 2h6v1h-6zM0 3h5v1h-5zM7 3h1v1h-1zM5 4h6v1h-6zM2 4h1v5h-1zM5 5h1v4h-1zM2 9h4v1h-4zM7 6h1v4h-1zM10 5h1v5h-1zM0 10h2v1h-2zM7 10h2v1h-2zM6 11h1v1h-1zM9 11h1v1h-1zM4 12h2v1h-2zM10 12h1v1h-1z"/><path id="g9ad8" d="M5 2h1v1h-1zM0 3h11v1h-11zM3 5h5v1h-5zM3 6h1v1h-1zM7 6h1v1h-1zM1 7h9v1h-9zM3 9h5v1h-5zM3 10h1v1h-1zM7 10h1v1h-1zM3 11h5v1h-5zM9 8h1v4h-1zM1 8h1v5h-1zM8 12h2v1h-2z"/><path id="g9ec4" d="M3 2h1v1h-1zM7 2h1v1h-1zM1 3h9v1h-9zM3 4h1v1h-1zM7 4h1v1h-1zM0 5h11v1h-11zM5 6h1v1h-1zM2 7h7v1h-7zM2 8h1v1h-1zM5 8h1v1h-1zM8 8h1v1h-1zM2 9h7v1h-7zM2 10h1v1h-1zM5 10h1v1h-1zM8 10h1v1h-1zM2 11h7v1h-7zM1 12h2v1h-2zM8 12h2v1h-2z"/><path id="g9ed8" d="M0 2h5v1h-5zM7 2h1v1h-1zM0 3h1v1h-1zM2 3h1v1h-1zM4 3h1v1h-1zM7 3h2v1h-2zM0 4h5v1h-5zM7 4h1v1h-1zM9 4h1v1h-1zM0 5h1v1h-1zM2 5h1v1h-1zM4 5h7v1h-7zM0 6h5v1h-5zM2 7h1v1h-1zM0 8h5v1h-5zM7 6h1v3h-1zM2 9h1v1h-1zM0 10h5v1h-5zM6 9h1v2h-1zM8 9h1v2h-1zM1 11h1v1h-1zM3 11h1v1h-1zM5 11h1v1h-1zM9 11h1v1h-1zM0 12h1v1h-1zM2 12h1v1h-1zM4 12h1v1h-1zM10 12h1v1h-1z"/><path id="gff08" d="M7 1h1v1h-1zM6 2h1v2h-1zM5 4h1v6h-1zM6 10h1v2h-1zM7 12h1v1h-1z"/><path id="gff09" d="M3 1h1v1h-1zM4 2h1v2h-1zM5 4h1v6h-1zM4 10h1v2h-1zM3 12h1v1h-1z"/><path id="gff0c" d="M1 8h2v2h-2zM2 10h1v1h-1zM1 11h1v1h-1z"/><path id="gff1a" d="M2 4h2v2h-2zM2 9h2v2h-2z"/><path id="b4e0d" d="M0 2h12v1h-12zM6 3h2v2h-2zM5 5h2v1h-2zM4 6h5v1h-5zM3 7h4v1h-4zM8 7h2v1h-2zM2 8h2v1h-2zM9 8h2v1h-2zM1 9h2v1h-2zM10 9h2v1h-2zM0 10h2v1h-2zM5 8h2v5h-2z"/><path id="b4ef6" d="M3 2h2v1h-2zM7 2h2v1h-2zM3 3h6v1h-6zM2 4h2v1h-2zM5 4h4v1h-4zM2 5h9v1h-9zM1 6h4v1h-4zM0 7h4v1h-4zM7 6h2v2h-2zM2 8h10v1h-10zM2 9h2v4h-2zM7 9h2v4h-2z"/><path id="b505a" d="M2 2h4v2h-4zM1 4h2v1h-2zM4 4h2v1h-2zM8 2h2v3h-2zM1 5h11v1h-11zM0 6h3v1h-3zM4 6h2v1h-2zM7 6h4v1h-4zM1 7h2v1h-2zM4 7h7v1h-7zM1 8h10v2h-10zM1 10h6v1h-6zM8 10h2v1h-2zM1 11h10v1h-10zM1 12h2v1h-2zM6 12h2v1h-2zM10 12h2v1h-2z"/><path id="b5305" d="M2 2h2v1h-2zM2 3h9v1h-9zM1 4h2v1h-2zM1 5h7v1h-7zM0 6h4v1h-4zM2 7h2v1h-2zM6 6h2v2h-2zM2 8h6v1h-6zM9 4h2v6h-2zM7 10h5v1h-5zM2 9h2v3h-2zM10 11h2v1h-2zM3 12h9v1h-9z"/><path id="b53cd" d="M7 2h4v1h-4zM2 3h6v1h-6zM2 4h2v2h-2zM2 6h9v1h-9zM2 7h4v1h-4zM8 7h2v1h-2zM5 8h4v1h-4zM2 8h2v2h-2zM6 9h2v1h-2zM5 10h4v1h-4zM1 10h2v2h-2zM4 11h2v1h-2zM8 11h2v1h-2zM0 12h5v1h-5zM9 12h3v1h-3z"/><path id="b53ef" d="M0 3h12v1h-12zM2 5h5v1h-5zM2 6h2v2h-2zM5 6h2v2h-2zM2 8h5v1h-5zM2 9h2v1h-2zM5 9h2v1h-2zM8 4h2v8h-2zM6 12h4v1h-4z"/><path id="b53f7" d="M2 2h8v1h-8zM2 3h2v1h-2zM8 3h2v1h-2zM2 4h8v1h-8zM0 6h12v1h-12zM4 7h2v1h-2zM3 8h7v1h-7zM5 11h2v1h-2zM8 9h2v3h-2zM6 12h3v1h-3z"/><path id="b5404" d="M3 2h2v1h-2zM3 3h7v1h-7zM2 4h3v1h-3zM8 4h2v1h-2zM1 5h2v1h-2zM4 5h2v1h-2zM7 5h2v1h-2zM5 6h3v1h-3zM4 7h2v1h-2zM7 7h2v1h-2zM2 8h3v1h-3zM8 8h2v1h-2zM0 9h12v1h-12zM3 10h2v2h-2zM8 10h2v2h-2zM3 12h7v1h-7z"/><path id="b540d" d="M3 2h2v1h-2zM3 3h8v1h-8zM3 4h2v1h-2zM8 4h2v1h-2zM2 5h4v1h-4zM7 5h2v1h-2zM1 6h2v1h-2zM5 6h3v1h-3zM5 7h2v1h-2zM3 8h8v1h-8zM0 9h5v1h-5zM3 10h2v2h-2zM9 9h2v3h-2zM3 12h8v1h-8z"/><path id="b542b" d="M5 2h2v1h-2zM4 3h4v1h-4zM3 4h3v1h-3zM7 4h2v1h-2zM2 5h2v1h-2zM5 5h2v1h-2zM8 5h2v1h-2zM0 6h12v1h-12zM7 7h2v1h-2zM6 8h2v1h-2zM2 9h8v1h-8zM2 10h2v2h-2zM8 10h2v2h-2zM2 12h8v1h-8z"/><path id="b578b" d="M1 2h7v1h-7zM9 2h2v1h-2zM2 3h4v2h-4zM7 3h4v2h-4zM0 5h11v1h-11zM7 6h4v1h-4zM2 6h4v2h-4zM9 7h2v1h-2zM1 8h2v1h-2zM4 8h3v1h-3zM8 8h3v1h-3zM5 9h2v1h-2zM2 10h8v1h-8zM5 11h2v1h-2zM0 12h12v1h-12z"/><path id="b5b57" d="M5 2h2v1h-2zM1 3h11v1h-11zM1 4h2v1h-2zM10 4h2v1h-2zM0 5h2v1h-2zM3 5h8v1h-8zM6 6h2v1h-2zM5 7h2v1h-2zM0 8h12v1h-12zM5 9h2v3h-2zM3 12h4v1h-4z"/><path id="b5f15" d="M1 2h7v1h-7zM6 3h2v2h-2zM2 5h6v1h-6zM2 6h2v1h-2zM1 7h7v1h-7zM6 8h2v3h-2zM3 11h4v1h-4zM4 12h2v1h-2zM10 2h2v11h-2z"/><path id="b62ec" d="M8 2h3v1h-3zM2 2h2v2h-2zM5 3h4v1h-4zM0 4h6v1h-6zM2 5h2v1h-2zM7 4h2v2h-2zM2 6h10v1h-10zM2 7h3v1h-3zM7 7h2v1h-2zM1 8h3v1h-3zM5 8h7v1h-7zM0 9h4v1h-4zM5 9h2v2h-2zM10 9h2v2h-2zM2 10h2v2h-2zM5 11h7v1h-7zM0 12h4v1h-4zM5 12h2v1h-2zM10 12h2v1h-2z"/><path id="b63a5" d="M2 2h2v1h-2zM7 2h2v1h-2zM2 3h10v1h-10zM0 4h7v1h-7zM9 4h2v1h-2zM2 5h2v1h-2zM6 5h4v1h-4zM2 6h10v1h-10zM2 7h3v1h-3zM7 7h2v1h-2zM1 8h11v1h-11zM0 9h4v1h-4zM6 9h2v1h-2zM9 9h2v1h-2zM5 10h5v1h-5zM2 10h2v2h-2zM7 11h4v1h-4zM0 12h8v1h-8zM10 12h2v1h-2z"/><path id="b659c" d="M3 2h2v1h-2zM9 2h2v1h-2zM2 3h4v1h-4zM7 3h4v1h-4zM1 4h2v1h-2zM5 4h2v1h-2zM8 4h3v1h-3zM0 5h6v1h-6zM3 6h2v1h-2zM6 6h2v1h-2zM9 5h2v2h-2zM1 7h10v1h-10zM3 8h2v1h-2zM9 8h3v1h-3zM1 9h10v1h-10zM1 10h4v1h-4zM0 11h2v1h-2zM3 11h2v1h-2zM6 10h2v2h-2zM2 12h3v1h-3zM9 10h2v3h-2z"/><path id="b6760" d="M2 2h2v2h-2zM5 3h6v1h-6zM0 4h6v1h-6zM2 5h2v2h-2zM2 7h3v1h-3zM1 8h5v1h-5zM0 9h4v1h-4zM2 10h2v2h-2zM7 4h2v8h-2zM2 12h10v1h-10z"/><path id="b683c" d="M6 2h2v1h-2zM2 2h2v2h-2zM6 3h5v1h-5zM0 4h7v1h-7zM9 4h2v1h-2zM2 5h8v1h-8zM2 6h2v1h-2zM7 6h2v1h-2zM1 7h4v1h-4zM6 7h4v1h-4zM1 8h6v1h-6zM9 8h3v1h-3zM0 9h4v1h-4zM5 9h6v1h-6zM5 10h2v2h-2zM9 10h2v2h-2zM2 10h2v3h-2zM5 12h6v1h-6z"/><path id="b6b63" d="M0 3h12v1h-12zM5 4h2v3h-2zM5 7h6v1h-6zM2 6h2v6h-2zM5 8h2v4h-2zM0 12h12v1h-12z"/><path id="b6b8a" d="M0 2h6v1h-6zM7 2h2v1h-2zM5 3h4v1h-4zM2 3h2v2h-2zM5 4h6v1h-6zM2 5h4v1h-4zM4 6h2v1h-2zM7 5h2v2h-2zM1 6h2v2h-2zM4 7h8v1h-8zM0 8h5v1h-5zM7 8h2v1h-2zM3 9h2v1h-2zM6 9h4v1h-4zM2 10h2v1h-2zM5 10h6v1h-6zM1 11h2v1h-2zM4 11h2v1h-2zM10 11h2v1h-2zM0 12h2v1h-2zM7 11h2v2h-2z"/><path id="b710a" d="M5 2h6v1h-6zM2 2h2v2h-2zM5 3h2v1h-2zM9 3h2v1h-2zM2 4h9v1h-9zM0 5h7v1h-7zM9 5h2v1h-2zM5 6h6v1h-6zM0 6h4v2h-4zM2 8h2v1h-2zM5 8h6v1h-6zM2 9h3v1h-3zM7 9h2v1h-2zM4 10h8v1h-8zM1 10h2v2h-2zM0 12h2v1h-2zM7 11h2v2h-2z"/><path id="b7279" d="M2 2h2v1h-2zM7 2h2v1h-2zM0 3h4v1h-4zM5 3h6v1h-6zM0 4h5v1h-5zM0 5h4v1h-4zM7 4h2v2h-2zM0 6h12v1h-12zM2 7h3v1h-3zM8 7h2v1h-2zM1 8h11v1h-11zM0 9h4v1h-4zM5 9h2v1h-2zM8 9h2v1h-2zM6 10h4v1h-4zM8 11h2v1h-2zM2 10h2v3h-2zM6 12h4v1h-4z"/><path id="b79cd" d="M3 2h3v1h-3zM0 3h4v1h-4zM7 2h2v2h-2zM2 4h2v1h-2zM5 4h7v1h-7zM0 5h9v1h-9zM2 6h2v1h-2zM5 6h4v1h-4zM2 7h7v1h-7zM10 5h2v3h-2zM1 8h11v1h-11zM0 9h4v1h-4zM2 10h2v3h-2zM7 9h2v4h-2z"/><path id="b79f0" d="M3 2h5v1h-5zM0 3h4v1h-4zM6 3h2v1h-2zM2 4h2v1h-2zM5 4h7v1h-7zM0 5h6v1h-6zM10 5h2v1h-2zM2 6h2v1h-2zM7 5h2v2h-2zM1 7h10v1h-10zM1 8h3v1h-3zM5 8h6v1h-6zM0 9h6v1h-6zM2 10h3v1h-3zM10 9h2v2h-2zM7 9h2v3h-2zM2 11h2v2h-2zM6 12h3v1h-3z"/><path id="b7a7a" d="M5 2h2v1h-2zM1 3h11v1h-11zM1 4h2v1h-2zM10 4h2v1h-2zM0 5h2v1h-2zM4 5h2v1h-2zM7 5h2v1h-2zM3 6h2v1h-2zM8 6h2v1h-2zM1 7h3v1h-3zM9 7h2v1h-2zM3 8h7v1h-7zM5 9h2v3h-2zM1 12h11v1h-11z"/><path id="b7b26" d="M2 2h2v1h-2zM7 2h2v1h-2zM2 3h10v1h-10zM1 4h4v1h-4zM6 4h4v1h-4zM0 5h2v1h-2zM5 5h2v1h-2zM9 5h2v1h-2zM3 6h2v1h-2zM8 6h2v1h-2zM2 7h10v1h-10zM1 8h3v1h-3zM0 9h4v1h-4zM5 9h2v1h-2zM8 8h2v2h-2zM6 10h4v1h-4zM8 11h2v1h-2zM2 10h2v3h-2zM7 12h3v1h-3z"/><path id="b7b49" d="M1 2h2v1h-2zM6 2h2v1h-2zM1 3h11v1h-11zM0 4h2v1h-2zM3 4h4v1h-4zM8 4h2v1h-2zM1 5h10v1h-10zM5 6h2v1h-2zM0 7h12v1h-12zM7 8h2v1h-2zM1 9h10v1h-10zM3 10h2v1h-2zM4 11h2v1h-2zM7 10h2v2h-2zM6 12h3v1h-3z"/><path id="b94a2" d="M5 2h7v1h-7zM1 2h2v2h-2zM5 3h2v1h-2zM10 3h2v1h-2zM1 4h6v1h-6zM8 4h4v1h-4zM0 5h2v1h-2zM5 5h7v1h-7zM0 6h9v1h-9zM2 7h2v1h-2zM5 7h4v1h-4zM10 6h2v2h-2zM0 8h12v1h-12zM2 9h2v1h-2zM5 9h3v1h-3zM9 9h3v1h-3zM2 10h5v2h-5zM10 10h2v2h-2zM2 12h2v1h-2zM5 12h2v1h-2zM8 12h4v1h-4z"/><path id="b96f6" d="M1 2h10v1h-10zM5 3h2v1h-2zM0 4h12v1h-12zM0 5h2v1h-2zM3 5h6v1h-6zM10 5h2v1h-2zM4 6h4v1h-4zM2 7h3v1h-3zM7 7h3v1h-3zM0 8h3v1h-3zM5 8h2v1h-2zM9 8h3v1h-3zM2 9h8v1h-8zM7 10h2v1h-2zM4 11h4v1h-4zM6 12h3v1h-3z"/><path id="bff08" d="M7 1h2v1h-2zM6 2h2v2h-2zM5 4h2v6h-2zM6 10h2v2h-2zM7 12h2v1h-2z"/></defs></svg>
<div id="topline"></div><div id="leftline"></div>
<div id="tb"></div>
<div id="cad"></div>
<svg width="803" height="632" viewBox="0 0 803 632" shape-rendering="crispEdges">
<rect x="437" y="35" width="359" height="1" fill="#808080"/>
<rect x="437" y="35" width="1" height="37" fill="#808080"/>
<rect x="437" y="71" width="359" height="1" fill="#808080"/>
<rect x="795" y="35" width="1" height="37" fill="#808080"/>
<rect x="438" y="36" width="357" height="1" fill="#fff"/>
<rect x="438" y="36" width="1" height="35" fill="#fff"/>
<rect x="437" y="72" width="360" height="1" fill="#fff"/>
<rect x="796" y="35" width="1" height="38" fill="#fff"/>
<rect x="444" y="35" width="64" height="2" fill="#d4d0c8"/>
<rect x="437" y="85" width="359" height="1" fill="#808080"/>
<rect x="437" y="85" width="1" height="36" fill="#808080"/>
<rect x="437" y="120" width="359" height="1" fill="#808080"/>
<rect x="795" y="85" width="1" height="36" fill="#808080"/>
<rect x="438" y="86" width="357" height="1" fill="#fff"/>
<rect x="438" y="86" width="1" height="34" fill="#fff"/>
<rect x="437" y="121" width="360" height="1" fill="#fff"/>
<rect x="796" y="85" width="1" height="37" fill="#fff"/>
<rect x="444" y="85" width="46" height="2" fill="#d4d0c8"/>
<rect x="437" y="134" width="359" height="1" fill="#808080"/>
<rect x="437" y="134" width="1" height="36" fill="#808080"/>
<rect x="437" y="169" width="359" height="1" fill="#808080"/>
<rect x="795" y="134" width="1" height="36" fill="#808080"/>
<rect x="438" y="135" width="357" height="1" fill="#fff"/>
<rect x="438" y="135" width="1" height="34" fill="#fff"/>
<rect x="437" y="170" width="360" height="1" fill="#fff"/>
<rect x="796" y="134" width="1" height="37" fill="#fff"/>
<rect x="444" y="134" width="238" height="2" fill="#d4d0c8"/>
<rect x="437" y="182" width="359" height="1" fill="#808080"/>
<rect x="437" y="182" width="1" height="302" fill="#808080"/>
<rect x="437" y="483" width="359" height="1" fill="#808080"/>
<rect x="795" y="182" width="1" height="302" fill="#808080"/>
<rect x="438" y="183" width="357" height="1" fill="#fff"/>
<rect x="438" y="183" width="1" height="300" fill="#fff"/>
<rect x="437" y="484" width="360" height="1" fill="#fff"/>
<rect x="796" y="182" width="1" height="303" fill="#fff"/>
<rect x="444" y="182" width="129" height="2" fill="#d4d0c8"/>
<rect x="437" y="496" width="359" height="1" fill="#808080"/>
<rect x="437" y="496" width="1" height="93" fill="#808080"/>
<rect x="437" y="588" width="359" height="1" fill="#808080"/>
<rect x="795" y="496" width="1" height="93" fill="#808080"/>
<rect x="438" y="497" width="357" height="1" fill="#fff"/>
<rect x="438" y="497" width="1" height="91" fill="#fff"/>
<rect x="437" y="589" width="360" height="1" fill="#fff"/>
<rect x="796" y="496" width="1" height="94" fill="#fff"/>
<rect x="444" y="496" width="64" height="2" fill="#d4d0c8"/>
<rect x="612" y="374" width="178" height="1" fill="#808080"/>
<rect x="612" y="374" width="1" height="102" fill="#808080"/>
<rect x="612" y="475" width="178" height="1" fill="#808080"/>
<rect x="789" y="374" width="1" height="102" fill="#808080"/>
<rect x="613" y="375" width="176" height="1" fill="#fff"/>
<rect x="613" y="375" width="1" height="100" fill="#fff"/>
<rect x="612" y="476" width="179" height="1" fill="#fff"/>
<rect x="790" y="374" width="1" height="103" fill="#fff"/>
<rect x="619" y="374" width="46" height="2" fill="#d4d0c8"/>
<rect x="502.5" y="52.5" width="285" height="17" fill="#fff" stroke="#000" stroke-width="1"/>
<rect x="718.5" y="101.5" width="66" height="17" fill="#fff" stroke="#000" stroke-width="1"/>
<rect x="586.5" y="150.5" width="201" height="17" fill="#fff" stroke="#000" stroke-width="1"/>
<rect x="678.5" y="205.5" width="109" height="17" fill="#fff" stroke="#000" stroke-width="1"/>
<rect x="678.5" y="229.5" width="109" height="17" fill="#fff" stroke="#000" stroke-width="1"/>
<rect x="678.5" y="253.5" width="109" height="17" fill="#fff" stroke="#000" stroke-width="1"/>
<rect x="678.5" y="277.5" width="109" height="17" fill="#fff" stroke="#000" stroke-width="1"/>
<rect x="678.5" y="301.5" width="109" height="17" fill="#fff" stroke="#000" stroke-width="1"/>
<rect x="678.5" y="325.5" width="109" height="17" fill="#fff" stroke="#000" stroke-width="1"/>
<rect x="678.5" y="349.5" width="109" height="17" fill="#fff" stroke="#000" stroke-width="1"/>
<rect x="446.5" y="208.5" width="161" height="265" fill="#fff" stroke="#000" stroke-width="1"/>
<defs><pattern id="dith" width="2" height="2" patternUnits="userSpaceOnUse"><rect width="2" height="2" fill="#d4d0c8"/><rect width="1" height="1" fill="#fff"/><rect x="1" y="1" width="1" height="1" fill="#fff"/></pattern></defs>
<rect x="591" y="209" width="16" height="264" fill="url(#dith)"/>
<rect x="591" y="209" width="16" height="16" fill="#404040"/>
<rect x="591" y="209" width="15" height="15" fill="#d4d0c8"/>
<rect x="592" y="210" width="14" height="14" fill="#808080"/>
<rect x="592" y="210" width="13" height="13" fill="#fff"/>
<rect x="593" y="211" width="12" height="12" fill="#d4d0c8"/>
<polygon points="595,219 602,219 598.5,215" fill="#000"/>
<rect x="591" y="225" width="16" height="31" fill="#404040"/>
<rect x="591" y="225" width="15" height="30" fill="#d4d0c8"/>
<rect x="592" y="226" width="14" height="29" fill="#808080"/>
<rect x="592" y="226" width="13" height="28" fill="#fff"/>
<rect x="593" y="227" width="12" height="27" fill="#d4d0c8"/>
<rect x="591" y="457" width="16" height="16" fill="#404040"/>
<rect x="591" y="457" width="15" height="15" fill="#d4d0c8"/>
<rect x="592" y="458" width="14" height="14" fill="#808080"/>
<rect x="592" y="458" width="13" height="13" fill="#fff"/>
<rect x="593" y="459" width="12" height="12" fill="#d4d0c8"/>
<polygon points="595,462 602,462 598.5,466" fill="#000"/>
<rect x="276" y="602" width="72" height="21" fill="#000"/>
<rect x="277" y="603" width="70" height="19" fill="#404040"/>
<rect x="277" y="603" width="69" height="18" fill="#fff"/>
<rect x="278" y="604" width="68" height="17" fill="#808080"/>
<rect x="278" y="604" width="67" height="16" fill="#d4d0c8"/>
<rect x="280.5" y="606.5" width="64" height="12" fill="none" stroke="#000" stroke-width="1" stroke-dasharray="1,1"/>
<rect x="378" y="602" width="56" height="21" fill="#404040"/>
<rect x="378" y="602" width="55" height="20" fill="#fff"/>
<rect x="379" y="603" width="54" height="19" fill="#808080"/>
<rect x="379" y="603" width="53" height="18" fill="#d4d0c8"/>
<rect x="464" y="602" width="66" height="21" fill="#404040"/>
<rect x="464" y="602" width="65" height="20" fill="#fff"/>
<rect x="465" y="603" width="64" height="19" fill="#808080"/>
<rect x="465" y="603" width="63" height="18" fill="#d4d0c8"/>
<rect x="446" y="510" width="13" height="13" fill="#fff"/>
<rect x="446" y="510" width="12" height="12" fill="#808080"/>
<rect x="447" y="511" width="11" height="11" fill="#d4d0c8"/>
<rect x="447" y="511" width="10" height="10" fill="#404040"/>
<rect x="448" y="512" width="9" height="9" fill="#fff"/>
<rect x="446" y="530" width="13" height="13" fill="#fff"/>
<rect x="446" y="530" width="12" height="12" fill="#808080"/>
<rect x="447" y="531" width="11" height="11" fill="#d4d0c8"/>
<rect x="447" y="531" width="10" height="10" fill="#404040"/>
<rect x="448" y="532" width="9" height="9" fill="#fff"/>
<rect x="446" y="550" width="13" height="13" fill="#fff"/>
<rect x="446" y="550" width="12" height="12" fill="#808080"/>
<rect x="447" y="551" width="11" height="11" fill="#d4d0c8"/>
<rect x="447" y="551" width="10" height="10" fill="#404040"/>
<rect x="448" y="552" width="9" height="9" fill="#fff"/>
<rect x="446" y="570" width="13" height="13" fill="#fff"/>
<rect x="446" y="570" width="12" height="12" fill="#808080"/>
<rect x="447" y="571" width="11" height="11" fill="#d4d0c8"/>
<rect x="447" y="571" width="10" height="10" fill="#404040"/>
<rect x="448" y="572" width="9" height="9" fill="#fff"/>
<rect x="787" y="3" width="16" height="14" fill="#404040"/>
<rect x="787" y="3" width="15" height="13" fill="#fff"/>
<rect x="788" y="4" width="14" height="12" fill="#808080"/>
<rect x="788" y="4" width="13" height="11" fill="#d4d0c8"/>
</svg>
<svg width="803" height="632" viewBox="0 0 803 632">
<circle cx="453" cy="107" r="5.5" fill="#fff"/>
<path d="M449.11,110.89 A5.5,5.5 0 0 1 456.89,103.11" fill="none" stroke="#808080" stroke-width="1"/>
<path d="M449.82,110.18 A4.5,4.5 0 0 1 456.18,103.82" fill="none" stroke="#404040" stroke-width="1"/>
<path d="M456.18,103.82 A4.5,4.5 0 0 1 449.82,110.18" fill="none" stroke="#d4d0c8" stroke-width="1"/>
<circle cx="453" cy="107" r="2.2" fill="#000"/>
<circle cx="516" cy="107" r="5.5" fill="#fff"/>
<path d="M512.11,110.89 A5.5,5.5 0 0 1 519.89,103.11" fill="none" stroke="#808080" stroke-width="1"/>
<path d="M512.82,110.18 A4.5,4.5 0 0 1 519.18,103.82" fill="none" stroke="#404040" stroke-width="1"/>
<path d="M519.18,103.82 A4.5,4.5 0 0 1 512.82,110.18" fill="none" stroke="#d4d0c8" stroke-width="1"/>
<circle cx="579" cy="107" r="5.5" fill="#fff"/>
<path d="M575.11,110.89 A5.5,5.5 0 0 1 582.89,103.11" fill="none" stroke="#808080" stroke-width="1"/>
<path d="M575.82,110.18 A4.5,4.5 0 0 1 582.18,103.82" fill="none" stroke="#404040" stroke-width="1"/>
<path d="M582.18,103.82 A4.5,4.5 0 0 1 575.82,110.18" fill="none" stroke="#d4d0c8" stroke-width="1"/>
<circle cx="630" cy="107" r="5.5" fill="#fff"/>
<path d="M626.11,110.89 A5.5,5.5 0 0 1 633.89,103.11" fill="none" stroke="#808080" stroke-width="1"/>
<path d="M626.82,110.18 A4.5,4.5 0 0 1 633.18,103.82" fill="none" stroke="#404040" stroke-width="1"/>
<path d="M633.18,103.82 A4.5,4.5 0 0 1 626.82,110.18" fill="none" stroke="#d4d0c8" stroke-width="1"/>
<circle cx="679" cy="393" r="5.5" fill="#fff"/>
<path d="M675.11,396.89 A5.5,5.5 0 0 1 682.89,389.11" fill="none" stroke="#808080" stroke-width="1"/>
<path d="M675.82,396.18 A4.5,4.5 0 0 1 682.18,389.82" fill="none" stroke="#404040" stroke-width="1"/>
<path d="M682.18,389.82 A4.5,4.5 0 0 1 675.82,396.18" fill="none" stroke="#d4d0c8" stroke-width="1"/>
<circle cx="679" cy="417" r="5.5" fill="#fff"/>
<path d="M675.11,420.89 A5.5,5.5 0 0 1 682.89,413.11" fill="none" stroke="#808080" stroke-width="1"/>
<path d="M675.82,420.18 A4.5,4.5 0 0 1 682.18,413.82" fill="none" stroke="#404040" stroke-width="1"/>
<path d="M682.18,413.82 A4.5,4.5 0 0 1 675.82,420.18" fill="none" stroke="#d4d0c8" stroke-width="1"/>
<circle cx="679" cy="417" r="2.2" fill="#000"/>
<circle cx="679" cy="441" r="5.5" fill="#fff"/>
<path d="M675.11,444.89 A5.5,5.5 0 0 1 682.89,437.11" fill="none" stroke="#808080" stroke-width="1"/>
<path d="M675.82,444.18 A4.5,4.5 0 0 1 682.18,437.82" fill="none" stroke="#404040" stroke-width="1"/>
<path d="M682.18,437.82 A4.5,4.5 0 0 1 675.82,444.18" fill="none" stroke="#d4d0c8" stroke-width="1"/>
<circle cx="679" cy="465" r="5.5" fill="#fff"/>
<path d="M675.11,468.89 A5.5,5.5 0 0 1 682.89,461.11" fill="none" stroke="#808080" stroke-width="1"/>
<path d="M675.82,468.18 A4.5,4.5 0 0 1 682.18,461.82" fill="none" stroke="#404040" stroke-width="1"/>
<path d="M682.18,461.82 A4.5,4.5 0 0 1 675.82,468.18" fill="none" stroke="#d4d0c8" stroke-width="1"/>
<path d="M449.3,535.5 L451.5,538.6 L455.8,533.2" fill="none" stroke="#000" stroke-width="2.1"/>
<path d="M791.5,5.8 L798.5,12.2 M798.5,5.8 L791.5,12.2" stroke="#000" stroke-width="1.7"/>
<polyline points="215.5,75 215.5,98" fill="none" stroke="#5cc85c" stroke-width="1"/>
<polyline points="215.5,84.5 220.6,84.5" fill="none" stroke="#5cc85c" stroke-width="1"/>
<polyline points="228.7,75.3 220.6,84.6 232.7,97.6" fill="none" stroke="#5cc85c" stroke-width="1"/>
<polyline points="249.5,75.3 249.5,83" fill="none" stroke="#5cc85c" stroke-width="1"/>
<polyline points="249.5,78.4 254.8,78.4" fill="none" stroke="#5cc85c" stroke-width="1"/>
<rect x="246.5" y="82.8" width="6.2" height="7.1" fill="none" stroke="#5cc85c" stroke-width="1"/>
<polyline points="244.2,90.5 242.4,98.6" fill="none" stroke="#5cc85c" stroke-width="1"/>
<polyline points="247.5,91 249,97.5" fill="none" stroke="#5cc85c" stroke-width="1"/>
<polyline points="250.3,91 251.5,97.5" fill="none" stroke="#5cc85c" stroke-width="1"/>
<polyline points="252.5,91 254.7,98" fill="none" stroke="#5cc85c" stroke-width="1"/>
<circle cx="231" cy="112" r="5.6" fill="none" stroke="#5cc85c" stroke-width="1.1"/>
<line x1="230.8" y1="112" x2="230.8" y2="142" stroke="#a82a2a" stroke-width="1.6"/>
<line x1="230.8" y1="151" x2="230.8" y2="209" stroke="#a82a2a" stroke-width="1.6"/>
<line x1="230.8" y1="219" x2="230.8" y2="260" stroke="#a82a2a" stroke-width="1.6"/>
<line x1="230.8" y1="269" x2="230.8" y2="306" stroke="#a82a2a" stroke-width="1.6"/>
<line x1="230.8" y1="321" x2="230.8" y2="357" stroke="#a82a2a" stroke-width="1.6"/>
<line x1="230.8" y1="366" x2="230.8" y2="413" stroke="#a82a2a" stroke-width="1.6"/>
<line x1="230.8" y1="422" x2="230.8" y2="451" stroke="#a82a2a" stroke-width="1.6"/>
<rect x="230" y="146" width="1" height="1" fill="#a82a2a"/>
<rect x="230" y="213" width="1" height="1" fill="#a82a2a"/>
<rect x="230" y="264" width="1" height="1" fill="#a82a2a"/>
<rect x="230" y="316" width="1" height="1" fill="#a82a2a"/>
<rect x="230" y="361" width="1" height="1" fill="#a82a2a"/>
<rect x="230" y="417" width="1" height="1" fill="#a82a2a"/>
<line x1="147" y1="308.8" x2="177" y2="308.8" stroke="#a82a2a" stroke-width="1.6"/>
<line x1="185" y1="308.8" x2="226" y2="308.8" stroke="#a82a2a" stroke-width="1.6"/>
<line x1="236" y1="308.8" x2="278" y2="308.8" stroke="#a82a2a" stroke-width="1.6"/>
<line x1="287" y1="308.8" x2="316" y2="308.8" stroke="#a82a2a" stroke-width="1.6"/>
<rect x="181" y="308" width="1" height="1" fill="#a82a2a"/>
<rect x="231" y="308" width="1" height="1" fill="#a82a2a"/>
<rect x="282" y="308" width="1" height="1" fill="#a82a2a"/>
<rect x="126.5" y="181.5" width="210" height="23" fill="none" stroke="#f6f6f6" stroke-width="1"/>
<rect x="126.5" y="425.5" width="210" height="25" fill="none" stroke="#f6f6f6" stroke-width="1"/>
<line x1="224.5" y1="204.5" x2="224.5" y2="425.5" stroke="#f6f6f6" stroke-width="1"/>
<line x1="238.5" y1="204.5" x2="238.5" y2="425.5" stroke="#f6f6f6" stroke-width="1"/>
<polyline points="230.7,308.2 277,252.5 345,252.5" fill="none" stroke="#5cc85c" stroke-width="1"/>
<polyline points="286.4,227 286.4,249.2" fill="none" stroke="#5cc85c" stroke-width="1"/>
<polyline points="283.3,229.3 282,236.2 278.2,241.6" fill="none" stroke="#5cc85c" stroke-width="1"/>
<polyline points="282,236.2 284.7,238.7" fill="none" stroke="#5cc85c" stroke-width="1"/>
<polyline points="289.4,229.3 288.4,236.5 291.7,239.5" fill="none" stroke="#5cc85c" stroke-width="1"/>
<polyline points="282.3,243.5 290.9,243.5" fill="none" stroke="#5cc85c" stroke-width="1"/>
<polyline points="278.2,249 292,248.5" fill="none" stroke="#5cc85c" stroke-width="1"/>
<polyline points="299.5,226 299.5,250.5" fill="none" stroke="#5cc85c" stroke-width="1"/>
<polyline points="296.2,234.4 301.6,234.4" fill="none" stroke="#5cc85c" stroke-width="1"/>
<polyline points="299.5,237.7 296.5,243.5" fill="none" stroke="#5cc85c" stroke-width="1"/>
<polyline points="302.2,228.7 309.7,228.7" fill="none" stroke="#5cc85c" stroke-width="1"/>
<polyline points="301.3,236.3 311.8,236.3" fill="none" stroke="#5cc85c" stroke-width="1"/>
<polyline points="306.5,236.3 306.5,250.5 303.6,247.5" fill="none" stroke="#5cc85c" stroke-width="1"/>
<polyline points="303.8,239.5 300.5,246.5" fill="none" stroke="#5cc85c" stroke-width="1"/>
<polyline points="308.3,239.5 311.8,246.7" fill="none" stroke="#5cc85c" stroke-width="1"/>
<polyline points="316.5,226 316.5,238 313.5,249.4" fill="none" stroke="#5cc85c" stroke-width="1"/>
<polyline points="316.5,227.4 327.7,227.4" fill="none" stroke="#5cc85c" stroke-width="1"/>
<polyline points="322.4,227.4 322.4,232.5" fill="none" stroke="#5cc85c" stroke-width="1"/>
<polyline points="319.4,232.5 326.7,232.5 326.7,239.7 319.4,239.7 319.4,232.5" fill="none" stroke="#5cc85c" stroke-width="1"/>
<polyline points="319.4,236.4 326.7,236.4" fill="none" stroke="#5cc85c" stroke-width="1"/>
<polyline points="323.4,239.7 323.4,250.5 320.5,247.3" fill="none" stroke="#5cc85c" stroke-width="1"/>
<polyline points="320.8,243.2 315.1,248.6" fill="none" stroke="#5cc85c" stroke-width="1"/>
<polyline points="324.2,243.2 328.8,247.8" fill="none" stroke="#5cc85c" stroke-width="1"/>
<polyline points="338.5,226 338.5,234.6" fill="none" stroke="#5cc85c" stroke-width="1"/>
<polyline points="338.5,231.4 345,231.4" fill="none" stroke="#5cc85c" stroke-width="1"/>
<polyline points="335.3,234.6 342,234.6 342,242.7 335.3,242.7 335.3,234.6" fill="none" stroke="#5cc85c" stroke-width="1"/>
<polyline points="333.7,244 332.3,250.5" fill="none" stroke="#5cc85c" stroke-width="1"/>
<polyline points="337.7,244 338.5,249.5" fill="none" stroke="#5cc85c" stroke-width="1"/>
<polyline points="340.6,244 341.4,249.5" fill="none" stroke="#5cc85c" stroke-width="1"/>
<polyline points="342.2,244 345.8,250.5" fill="none" stroke="#5cc85c" stroke-width="1"/>
<line x1="98.5" y1="181" x2="98.5" y2="450.5" stroke="#5cc85c" stroke-width="1"/>
<line x1="88" y1="181.5" x2="124" y2="181.5" stroke="#5cc85c" stroke-width="1"/>
<line x1="88" y1="450.5" x2="124" y2="450.5" stroke="#5cc85c" stroke-width="1"/>
<polygon points="90.51,175.63 104.37,189.49 106.49,187.37 92.63,173.51" fill="#0e360e" stroke="#5cc85c" stroke-width="1"/>
<polygon points="90.51,444.63 104.37,458.49 106.49,456.37 92.63,442.51" fill="#0e360e" stroke="#5cc85c" stroke-width="1"/>
<line x1="79" y1="302" x2="96" y2="302" stroke="#30ee30" stroke-width="2.8"/>
<line x1="79" y1="313.5" x2="96" y2="313.5" stroke="#30ee30" stroke-width="2.8"/>
<line x1="87.2" y1="302" x2="87.2" y2="313.5" stroke="#30ee30" stroke-width="2.8"/>
<line x1="126" y1="483.5" x2="336.5" y2="483.5" stroke="#5cc85c" stroke-width="1"/>
<line x1="126.5" y1="455" x2="126.5" y2="494" stroke="#5cc85c" stroke-width="1"/>
<line x1="336.5" y1="455" x2="336.5" y2="494" stroke="#5cc85c" stroke-width="1"/>
<polygon points="120.63,491.49 134.49,477.63 132.37,475.51 118.51,489.37" fill="#0e360e" stroke="#5cc85c" stroke-width="1"/>
<polygon points="330.63,491.49 344.49,477.63 342.37,475.51 328.51,489.37" fill="#0e360e" stroke="#5cc85c" stroke-width="1"/>
<path d="M225,464 H233.5 Q236,464 236,467 V469 Q236,471.5 233.5,472 Q237,472.5 237,476 V478 Q237,481 234,481 H225 Z M225,472 H233" fill="none" stroke="#30ee30" stroke-width="2.8"/>
<line x1="224" y1="363.5" x2="280" y2="363.5" stroke="#5cc85c" stroke-width="1"/>
<line x1="224.5" y1="342" x2="224.5" y2="374" stroke="#5cc85c" stroke-width="1.3"/>
<line x1="238.5" y1="342" x2="238.5" y2="374" stroke="#5cc85c" stroke-width="1.3"/>
<polygon points="218.63,371.49 232.49,357.63 230.37,355.51 216.51,369.37" fill="#0e360e" stroke="#5cc85c" stroke-width="1"/>
<polygon points="232.63,371.49 246.49,357.63 244.37,355.51 230.51,369.37" fill="#0e360e" stroke="#5cc85c" stroke-width="1"/>
<polyline points="256,345 256,358.5 257.5,359.8 260,359.8" fill="none" stroke="#30ee30" stroke-width="2.8" stroke-linejoin="round"/>
<line x1="252.5" y1="349.2" x2="261" y2="349.2" stroke="#30ee30" stroke-width="2.6"/>
<polyline points="261.5,349.5 264.2,359.6 267.2,350.5 272.4,359.6 275.8,349.5" fill="none" stroke="#30ee30" stroke-width="2.8" stroke-linejoin="round"/>
<line x1="294.5" y1="387" x2="294.5" y2="451" stroke="#5cc85c" stroke-width="1"/>
<line x1="284" y1="425.5" x2="313" y2="425.5" stroke="#5cc85c" stroke-width="1.3"/>
<line x1="284" y1="450.5" x2="313" y2="450.5" stroke="#5cc85c" stroke-width="1.3"/>
<polygon points="286.51,419.63 300.37,433.49 302.49,431.37 288.63,417.51" fill="#0e360e" stroke="#5cc85c" stroke-width="1"/>
<polygon points="286.51,444.63 300.37,458.49 302.49,456.37 288.63,442.51" fill="#0e360e" stroke="#5cc85c" stroke-width="1"/>
<polyline points="274,390.5 274,393 276,395.4 290.5,395.4" fill="none" stroke="#30ee30" stroke-width="2.8" stroke-linejoin="round"/>
<polyline points="273.5,401.3 288.5,401.3 290.5,399.5 290.5,398" fill="none" stroke="#30ee30" stroke-width="2.8" stroke-linejoin="round"/>
<line x1="278.6" y1="392.5" x2="278.6" y2="405.5" stroke="#30ee30" stroke-width="3"/>
<polyline points="191.2,515 191.2,530 188.4,538.4" fill="none" stroke="#5cc85c" stroke-width="1"/>
<polyline points="188.4,522.2 190,525" fill="none" stroke="#5cc85c" stroke-width="1"/>
<polyline points="193.4,521.3 191.7,525" fill="none" stroke="#5cc85c" stroke-width="1"/>
<polyline points="192.2,532.4 197.9,533.3" fill="none" stroke="#5cc85c" stroke-width="1"/>
<polyline points="196.3,525 196.3,516.2 202,516.2 202,523.5 196.3,523.5" fill="none" stroke="#5cc85c" stroke-width="1"/>
<polyline points="196.3,519.7 202,519.7" fill="none" stroke="#5cc85c" stroke-width="1"/>
<polyline points="195,528.6 202.6,528.6" fill="none" stroke="#5cc85c" stroke-width="1"/>
<polyline points="192.2,532.4 203.9,532.4" fill="none" stroke="#5cc85c" stroke-width="1"/>
<polyline points="199.5,528.6 199.5,541" fill="none" stroke="#5cc85c" stroke-width="1"/>
<polyline points="210.5,515 210.5,537.7 208.3,535.2" fill="none" stroke="#5cc85c" stroke-width="1"/>
<polyline points="207,522.2 212.5,522.2" fill="none" stroke="#5cc85c" stroke-width="1"/>
<polyline points="205.2,530.5 212.5,525.7" fill="none" stroke="#5cc85c" stroke-width="1"/>
<polyline points="214.3,515.3 215.5,518.5" fill="none" stroke="#5cc85c" stroke-width="1"/>
<polyline points="212.2,519.4 221,519.4" fill="none" stroke="#5cc85c" stroke-width="1"/>
<polyline points="213.2,520.5 214.2,524" fill="none" stroke="#5cc85c" stroke-width="1"/>
<polyline points="218.8,520.5 217.6,524" fill="none" stroke="#5cc85c" stroke-width="1"/>
<polyline points="212,525 222.6,525" fill="none" stroke="#5cc85c" stroke-width="1"/>
<polyline points="211.5,529.8 221.9,529.8" fill="none" stroke="#5cc85c" stroke-width="1"/>
<polyline points="219,529.5 211.5,537.7" fill="none" stroke="#5cc85c" stroke-width="1"/>
<polyline points="212.7,531.4 221.6,538.7" fill="none" stroke="#5cc85c" stroke-width="1"/>
<polyline points="222.6,513 222.6,537.7" fill="none" stroke="#5cc85c" stroke-width="1"/>
<polyline points="222.6,525.5 238.5,525.5" fill="none" stroke="#5cc85c" stroke-width="1"/>
<polyline points="238.5,513 238.5,537.8" fill="none" stroke="#5cc85c" stroke-width="1"/>
<polyline points="250.1,518.6 257.7,518.6" fill="none" stroke="#5cc85c" stroke-width="1"/>
<polyline points="248,524.4 258.3,524.4" fill="none" stroke="#5cc85c" stroke-width="1"/>
<polyline points="253.5,518.6 253.2,525 248.4,533.7" fill="none" stroke="#5cc85c" stroke-width="1"/>
<polyline points="255.6,518.6 255.6,530" fill="none" stroke="#5cc85c" stroke-width="1"/>
<polyline points="259.4,521.7 259.4,529.2" fill="none" stroke="#5cc85c" stroke-width="1"/>
<polyline points="262.5,516.2 262.5,532.7 259.5,530" fill="none" stroke="#5cc85c" stroke-width="1"/>
<polyline points="251.2,533.3 260.7,533.3" fill="none" stroke="#5cc85c" stroke-width="1"/>
<polyline points="254.9,529 254.9,538" fill="none" stroke="#5cc85c" stroke-width="1"/>
<polyline points="248,537.8 263.8,537.8" fill="none" stroke="#5cc85c" stroke-width="1"/>
<polyline points="271.4,515.2 271.4,519.5" fill="none" stroke="#5cc85c" stroke-width="1"/>
<polyline points="270,520.7 265.2,526.5" fill="none" stroke="#5cc85c" stroke-width="1"/>
<polyline points="270,519.6 274.8,519.6" fill="none" stroke="#5cc85c" stroke-width="1"/>
<polyline points="266.2,530.3 273.4,530.3" fill="none" stroke="#5cc85c" stroke-width="1"/>
<polyline points="271,520 271,535 274,533" fill="none" stroke="#5cc85c" stroke-width="1"/>
<polyline points="274.4,538.5 274.4,517.6 281.6,517.6 281.6,538.5" fill="none" stroke="#5cc85c" stroke-width="1"/>
<polyline points="276.8,522.7 279.6,532.7" fill="none" stroke="#5cc85c" stroke-width="1"/>
<polyline points="279.6,522.4 275.1,533" fill="none" stroke="#5cc85c" stroke-width="1"/>
<polyline points="278.2,535.4 281.6,538" fill="none" stroke="#5cc85c" stroke-width="1"/>
<line x1="184" y1="541.5" x2="284" y2="541.5" stroke="#5cc85c" stroke-width="1.3"/>
<line x1="184" y1="545.5" x2="284" y2="545.5" stroke="#5cc85c" stroke-width="1.3"/>
</svg>
<div class="title" style="left:2.5px"><span class="ct"><svg class="g" width="13" height="14"><use href="#b505a"/></svg>做</span><span class="ct"><svg class="g" width="13" height="14"><use href="#b96f6"/></svg>零</span><span class="ct"><svg class="g" width="13" height="14"><use href="#b4ef6"/></svg>件</span></div><div class="title" style="left:40.5px"><span class="ta">-</span><span class="ta">&gt;</span></div><div class="title" style="left:55.7px"><span class="ct"><svg class="g" width="13" height="14"><use href="#b710a"/></svg>焊</span><span class="ct"><svg class="g" width="13" height="14"><use href="#b63a5"/></svg>接</span></div><div class="title" style="left:81.2px"><span class="ta">H</span></div><div class="title" style="left:88px"><span class="ct"><svg class="g" width="13" height="14"><use href="#b578b"/></svg>型</span><span class="ct"><svg class="g" width="13" height="14"><use href="#b94a2"/></svg>钢</span></div><div class="title" style="left:114px"><span class="ct"><svg class="g" width="13" height="14"><use href="#bff08"/></svg>（</span></div><div class="title" style="left:126.5px"><span class="ct"><svg class="g" width="13" height="14"><use href="#b96f6"/></svg>零</span><span class="ct"><svg class="g" width="13" height="14"><use href="#b4ef6"/></svg>件</span><span class="ct"><svg class="g" width="13" height="14"><use href="#b540d"/></svg>名</span><span class="ct"><svg class="g" width="13" height="14"><use href="#b79f0"/></svg>称</span><span class="ct"><svg class="g" width="13" height="14"><use href="#b4e0d"/></svg>不</span><span class="ct"><svg class="g" width="13" height="14"><use href="#b53ef"/></svg>可</span><span class="ct"><svg class="g" width="13" height="14"><use href="#b5305"/></svg>包</span><span class="ct"><svg class="g" width="13" height="14"><use href="#b542b"/></svg>含</span></div><div class="title" style="left:230.5px"><span class="ta">@</span></div><div class="title" style="left:243.5px"><span class="ta">*</span></div><div class="title" style="left:256.5px"><span class="ta">?</span></div><div class="title" style="left:264.5px"><span class="ta">:</span></div><div class="title" style="left:272px"><span class="ta">|</span></div><div class="title" style="left:285.5px"><span class="ta">&lt;</span></div><div class="title" style="left:297px"><span class="ta">&gt;</span></div><div class="title" style="left:308px"><span class="ct"><svg class="g" width="13" height="14"><use href="#b5404"/></svg>各</span><span class="ct"><svg class="g" width="13" height="14"><use href="#b79cd"/></svg>种</span><span class="ct"><svg class="g" width="13" height="14"><use href="#b62ec"/></svg>括</span><span class="ct"><svg class="g" width="13" height="14"><use href="#b53f7"/></svg>号</span></div><div class="title" style="left:363.5px"><span class="ct"><svg class="g" width="13" height="14"><use href="#b5f15"/></svg>引</span><span class="ct"><svg class="g" width="13" height="14"><use href="#b53f7"/></svg>号</span></div><div class="title" style="left:392px"><span class="ct"><svg class="g" width="13" height="14"><use href="#b6b63"/></svg>正</span><span class="ct"><svg class="g" width="13" height="14"><use href="#b53cd"/></svg>反</span><span class="ct"><svg class="g" width="13" height="14"><use href="#b659c"/></svg>斜</span><span class="ct"><svg class="g" width="13" height="14"><use href="#b6760"/></svg>杠</span></div><div class="title" style="left:447.5px"><span class="ct"><svg class="g" width="13" height="14"><use href="#b7a7a"/></svg>空</span><span class="ct"><svg class="g" width="13" height="14"><use href="#b683c"/></svg>格</span></div><div class="title" style="left:476px"><span class="ct"><svg class="g" width="13" height="14"><use href="#b7b49"/></svg>等</span><span class="ct"><svg class="g" width="13" height="14"><use href="#b7279"/></svg>特</span><span class="ct"><svg class="g" width="13" height="14"><use href="#b6b8a"/></svg>殊</span><span class="ct"><svg class="g" width="13" height="14"><use href="#b5b57"/></svg>字</span><span class="ct"><svg class="g" width="13" height="14"><use href="#b7b26"/></svg>符</span></div><div class="title" style="left:541.5px"><span class="ta">)</span></div><div class="t" style="left:446px;top:31px"><span class="a" style="width:12px"><span class="s">1.</span></span><span class="c"><svg class="g" width="12" height="14"><use href="#g96f6"/></svg>零</span><span class="c"><svg class="g" width="12" height="14"><use href="#g4ef6"/></svg>件</span><span class="c"><svg class="g" width="12" height="14"><use href="#g540d"/></svg>名</span><span class="c"><svg class="g" width="12" height="14"><use href="#g79f0"/></svg>称</span></div><div class="t" style="left:446px;top:55px"><span class="c"><svg class="g" width="12" height="14"><use href="#g96f6"/></svg>零</span><span class="c"><svg class="g" width="12" height="14"><use href="#g4ef6"/></svg>件</span><span class="c"><svg class="g" width="12" height="14"><use href="#g540d"/></svg>名</span><span class="c"><svg class="g" width="12" height="14"><use href="#g79f0"/></svg>称</span></div><div class="t" style="left:504px;top:55px"><span class="a" style="width:24px"><span class="s">HJH-</span></span></div><div class="t" style="left:446px;top:80px"><span class="a" style="width:12px"><span class="s">2.</span></span><span class="c"><svg class="g" width="12" height="14"><use href="#g6750"/></svg>材</span><span class="c"><svg class="g" width="12" height="14"><use href="#g8d28"/></svg>质</span></div><div class="t" style="left:463px;top:101px"><span class="a" style="width:30px"><span class="s">Q235B</span></span></div><div class="t" style="left:526px;top:101px"><span class="a" style="width:30px"><span class="s">Q355B</span></span></div><div class="t" style="left:589px;top:101px"><span class="a" style="width:18px"><span class="s">45#</span></span></div><div class="t" style="left:640px;top:101px"><span class="c"><svg class="g" width="12" height="14"><use href="#g5176"/></svg>其</span><span class="c"><svg class="g" width="12" height="14"><use href="#g5b83"/></svg>它</span></div><div class="t" style="left:680px;top:104px"><span class="c"><svg class="g" width="12" height="14"><use href="#g8f93"/></svg>输</span><span class="c"><svg class="g" width="12" height="14"><use href="#g5165"/></svg>入</span><span class="a" style="width:6px"><span class="s">:</span></span></div><div class="t" style="left:720px;top:103px"><span class="c"><svg class="g" width="12" height="14"><use href="#g5f85"/></svg>待</span><span class="c"><svg class="g" width="12" height="14"><use href="#g5b9a"/></svg>定</span></div><div class="t" style="left:446px;top:129px"><span class="a" style="width:12px"><span class="s">3.</span></span><span class="c"><svg class="g" width="12" height="14"><use href="#g5bc6"/></svg>密</span><span class="c"><svg class="g" width="12" height="14"><use href="#g5ea6"/></svg>度</span><span class="a" style="width:6px"><span class="s">(</span></span><span class="c"><svg class="g" width="12" height="14"><use href="#g53c2"/></svg>参</span><span class="c"><svg class="g" width="12" height="14"><use href="#g8003"/></svg>考</span><span class="c"><svg class="g" width="12" height="14"><use href="#gff1a"/></svg>：</span><span class="c"><svg class="g" width="12" height="14"><use href="#g78b3"/></svg>碳</span><span class="c"><svg class="g" width="12" height="14"><use href="#g7d20"/></svg>素</span><span class="c"><svg class="g" width="12" height="14"><use href="#g94a2"/></svg>钢</span><span class="a" style="width:36px"><span class="s">7.85&nbsp;&nbsp;</span></span><span class="c"><svg class="g" width="12" height="14"><use href="#g94dd"/></svg>铝</span><span class="a" style="width:24px"><span class="s">2.8&nbsp;</span></span><span class="c"><svg class="g" width="12" height="14"><use href="#g9ec4"/></svg>黄</span><span class="c"><svg class="g" width="12" height="14"><use href="#g94dc"/></svg>铜</span><span class="a" style="width:24px"><span class="s">8.8)</span></span></div><div class="t" style="left:446px;top:153px"><span class="c"><svg class="g" width="12" height="14"><use href="#g8f93"/></svg>输</span><span class="c"><svg class="g" width="12" height="14"><use href="#g5165"/></svg>入</span><span class="c"><svg class="g" width="12" height="14"><use href="#g5bc6"/></svg>密</span><span class="c"><svg class="g" width="12" height="14"><use href="#g5ea6"/></svg>度</span><span class="a" style="width:6px"><span class="s">(</span></span><span class="c"><svg class="g" width="12" height="14"><use href="#g5355"/></svg>单</span><span class="c"><svg class="g" width="12" height="14"><use href="#g4f4d"/></svg>位</span><span class="c"><svg class="g" width="12" height="14"><use href="#gff1a"/></svg>：</span><span class="a" style="width:42px"><span class="s">g/cm3):</span></span></div><div class="t" style="left:588px;top:153px"><span class="a" style="width:24px"><span class="s">7.85</span></span></div><div class="t" style="left:446px;top:177px"><span class="a" style="width:12px"><span class="s">4.</span></span><span class="c"><svg class="g" width="12" height="14"><use href="#g96f6"/></svg>零</span><span class="c"><svg class="g" width="12" height="14"><use href="#g4ef6"/></svg>件</span><span class="c"><svg class="g" width="12" height="14"><use href="#g5c3a"/></svg>尺</span><span class="c"><svg class="g" width="12" height="14"><use href="#g5bf8"/></svg>寸</span><span class="a" style="width:6px"><span class="s">(</span></span><span class="c"><svg class="g" width="12" height="14"><use href="#g5355"/></svg>单</span><span class="c"><svg class="g" width="12" height="14"><use href="#g4f4d"/></svg>位</span><span class="c"><svg class="g" width="12" height="14"><use href="#gff1a"/></svg>：</span><span class="a" style="width:18px"><span class="s">mm)</span></span></div><div class="t" style="left:499px;top:196px"><span class="c"><svg class="g" width="12" height="14"><use href="#g622a"/></svg>截</span><span class="c"><svg class="g" width="12" height="14"><use href="#g9762"/></svg>面</span><span class="c"><svg class="g" width="12" height="14"><use href="#g5e93"/></svg>库</span><span class="c"><svg class="g" width="12" height="14"><use href="#g9009"/></svg>选</span><span class="c"><svg class="g" width="12" height="14"><use href="#g62e9"/></svg>择</span></div><div class="t" style="left:620px;top:368px"><span class="a" style="width:6px"><span class="s">K</span></span><span class="c"><svg class="g" width="12" height="14"><use href="#g70b9"/></svg>点</span><span class="c"><svg class="g" width="12" height="14"><use href="#g65b9"/></svg>方</span><span class="c"><svg class="g" width="12" height="14"><use href="#g4f4d"/></svg>位</span></div><div class="t" style="right:133px;top:208px"><span class="c"><svg class="g" width="12" height="14"><use href="#g9009"/></svg>选</span><span class="c"><svg class="g" width="12" height="14"><use href="#g4e2d"/></svg>中</span><span class="c"><svg class="g" width="12" height="14"><use href="#g622a"/></svg>截</span><span class="c"><svg class="g" width="12" height="14"><use href="#g9762"/></svg>面</span><span class="a" style="width:6px"><span class="s">:</span></span></div><div class="t" style="right:133px;top:232px"><span class="c"><svg class="g" width="12" height="14"><use href="#g622a"/></svg>截</span><span class="c"><svg class="g" width="12" height="14"><use href="#g9762"/></svg>面</span><span class="c"><svg class="g" width="12" height="14"><use href="#g7c7b"/></svg>类</span><span class="c"><svg class="g" width="12" height="14"><use href="#g578b"/></svg>型</span><span class="a" style="width:6px"><span class="s">:</span></span></div><div class="t" style="right:133px;top:256px"><span class="c"><svg class="g" width="12" height="14"><use href="#g9ad8"/></svg>高</span><span class="c"><svg class="g" width="12" height="14"><use href="#g5ea6"/></svg>度</span><span class="a" style="width:18px"><span class="s">&nbsp;H:</span></span></div><div class="t" style="left:680px;top:256px"><span class="a" style="width:30px"><span class="s">0.000</span></span></div><div class="t" style="right:133px;top:280px"><span class="c"><svg class="g" width="12" height="14"><use href="#g5bbd"/></svg>宽</span><span class="c"><svg class="g" width="12" height="14"><use href="#g5ea6"/></svg>度</span><span class="a" style="width:18px"><span class="s">&nbsp;B:</span></span></div><div class="t" style="left:680px;top:280px"><span class="a" style="width:30px"><span class="s">0.000</span></span></div><div class="t" style="right:133px;top:304px"><span class="c"><svg class="g" width="12" height="14"><use href="#g8179"/></svg>腹</span><span class="c"><svg class="g" width="12" height="14"><use href="#g677f"/></svg>板</span><span class="c"><svg class="g" width="12" height="14"><use href="#g539a"/></svg>厚</span><span class="a" style="width:18px"><span class="s">Tw:</span></span></div><div class="t" style="left:680px;top:304px"><span class="a" style="width:30px"><span class="s">0.000</span></span></div><div class="t" style="right:133px;top:328px"><span class="c"><svg class="g" width="12" height="14"><use href="#g7ffc"/></svg>翼</span><span class="c"><svg class="g" width="12" height="14"><use href="#g7f18"/></svg>缘</span><span class="c"><svg class="g" width="12" height="14"><use href="#g539a"/></svg>厚</span><span class="a" style="width:18px"><span class="s">Tf:</span></span></div><div class="t" style="left:680px;top:328px"><span class="a" style="width:30px"><span class="s">0.000</span></span></div><div class="t" style="right:133px;top:352px"><span class="c"><svg class="g" width="12" height="14"><use href="#g957f"/></svg>长</span><span class="c"><svg class="g" width="12" height="14"><use href="#g5ea6"/></svg>度</span><span class="a" style="width:18px"><span class="s">&nbsp;L:</span></span></div><div class="t" style="left:680px;top:352px"><span class="a" style="width:24px"><span class="s">1000</span></span></div><div class="t" style="left:690px;top:387px"><span class="a" style="width:6px"><span class="s">X</span></span><span class="c"><svg class="g" width="12" height="14"><use href="#g65e0"/></svg>无</span><span class="c"><svg class="g" width="12" height="14"><use href="#g7a77"/></svg>穷</span><span class="c"><svg class="g" width="12" height="14"><use href="#g5927"/></svg>大</span></div><div class="t" style="left:690px;top:411px"><span class="a" style="width:6px"><span class="s">Y</span></span><span class="c"><svg class="g" width="12" height="14"><use href="#g65e0"/></svg>无</span><span class="c"><svg class="g" width="12" height="14"><use href="#g7a77"/></svg>穷</span><span class="c"><svg class="g" width="12" height="14"><use href="#g5927"/></svg>大</span></div><div class="t" style="left:690px;top:435px"><span class="a" style="width:6px"><span class="s">Z</span></span><span class="c"><svg class="g" width="12" height="14"><use href="#g65e0"/></svg>无</span><span class="c"><svg class="g" width="12" height="14"><use href="#g7a77"/></svg>穷</span><span class="c"><svg class="g" width="12" height="14"><use href="#g5927"/></svg>大</span></div><div class="t" style="left:690px;top:459px"><span class="c"><svg class="g" width="12" height="14"><use href="#g70b9"/></svg>点</span><span class="c"><svg class="g" width="12" height="14"><use href="#g53d6"/></svg>取</span><span class="a" style="width:6px"><span class="s">K</span></span><span class="c"><svg class="g" width="12" height="14"><use href="#g70b9"/></svg>点</span></div><div class="t" style="left:446px;top:491px"><span class="a" style="width:12px"><span class="s">5.</span></span><span class="c"><svg class="g" width="12" height="14"><use href="#g5176"/></svg>其</span><span class="c"><svg class="g" width="12" height="14"><use href="#g4ed6"/></svg>他</span><span class="c"><svg class="g" width="12" height="14"><use href="#g8bbe"/></svg>设</span><span class="c"><svg class="g" width="12" height="14"><use href="#g7f6e"/></svg>置</span></div><div class="t" style="left:464px;top:510px"><span class="c"><svg class="g" width="12" height="14"><use href="#g9009"/></svg>选</span><span class="c"><svg class="g" width="12" height="14"><use href="#g4e2d"/></svg>中</span><span class="c"><svg class="g" width="12" height="14"><use href="#g5fc3"/></svg>心</span><span class="c"><svg class="g" width="12" height="14"><use href="#g7ebf"/></svg>线</span><span class="c"><svg class="g" width="12" height="14"><use href="#g751f"/></svg>生</span><span class="c"><svg class="g" width="12" height="14"><use href="#g6210"/></svg>成</span><span class="c"><svg class="g" width="12" height="14"><use href="#g6a21"/></svg>模</span><span class="c"><svg class="g" width="12" height="14"><use href="#g578b"/></svg>型</span><span class="a" style="width:6px"><span class="s">(</span></span><span class="c"><svg class="g" width="12" height="14"><use href="#g652f"/></svg>支</span><span class="c"><svg class="g" width="12" height="14"><use href="#g6301"/></svg>持</span><span class="c"><svg class="g" width="12" height="14"><use href="#g6279"/></svg>批</span><span class="c"><svg class="g" width="12" height="14"><use href="#g91cf"/></svg>量</span><span class="c"><svg class="g" width="12" height="14"><use href="#g751f"/></svg>生</span><span class="c"><svg class="g" width="12" height="14"><use href="#g6210"/></svg>成</span><span class="a" style="width:6px"><span class="s">)</span></span></div><div class="t" style="left:464px;top:530px"><span class="c"><svg class="g" width="12" height="14"><use href="#g7528"/></svg>用</span><span class="c"><svg class="g" width="12" height="14"><use href="#g6237"/></svg>户</span><span class="c"><svg class="g" width="12" height="14"><use href="#g70b9"/></svg>点</span><span class="c"><svg class="g" width="12" height="14"><use href="#g53d6"/></svg>取</span><span class="c"><svg class="g" width="12" height="14"><use href="#g6a21"/></svg>模</span><span class="c"><svg class="g" width="12" height="14"><use href="#g578b"/></svg>型</span><span class="c"><svg class="g" width="12" height="14"><use href="#g63d2"/></svg>插</span><span class="c"><svg class="g" width="12" height="14"><use href="#g5165"/></svg>入</span><span class="c"><svg class="g" width="12" height="14"><use href="#g70b9"/></svg>点</span><span class="a" style="width:24px"><span class="s">---&gt;</span></span><span class="c"><svg class="g" width="12" height="14"><use href="#g96f6"/></svg>零</span><span class="c"><svg class="g" width="12" height="14"><use href="#g4ef6"/></svg>件</span><span class="c"><svg class="g" width="12" height="14"><use href="#g5728"/></svg>在</span><span class="c"><svg class="g" width="12" height="14"><use href="#g5750"/></svg>坐</span><span class="c"><svg class="g" width="12" height="14"><use href="#g6807"/></svg>标</span><span class="c"><svg class="g" width="12" height="14"><use href="#g539f"/></svg>原</span><span class="c"><svg class="g" width="12" height="14"><use href="#g70b9"/></svg>点</span><span class="c"><svg class="g" width="12" height="14"><use href="#g63d2"/></svg>插</span><span class="c"><svg class="g" width="12" height="14"><use href="#g5165"/></svg>入</span><span class="c"><svg class="g" width="12" height="14"><use href="#g539f"/></svg>原</span><span class="c"><svg class="g" width="12" height="14"><use href="#g56fe"/></svg>图</span></div><div class="t" style="left:464px;top:550px"><span class="c"><svg class="g" width="12" height="14"><use href="#g578b"/></svg>型</span><span class="c"><svg class="g" width="12" height="14"><use href="#g6750"/></svg>材</span><span class="c"><svg class="g" width="12" height="14"><use href="#g53ea"/></svg>只</span><span class="c"><svg class="g" width="12" height="14"><use href="#g5b9e"/></svg>实</span><span class="c"><svg class="g" width="12" height="14"><use href="#g4f53"/></svg>体</span><span class="c"><svg class="g" width="12" height="14"><use href="#g5efa"/></svg>建</span><span class="c"><svg class="g" width="12" height="14"><use href="#g6a21"/></svg>模</span><span class="c"><svg class="g" width="12" height="14"><use href="#gff0c"/></svg>，</span><span class="c"><svg class="g" width="12" height="14"><use href="#g4e0d"/></svg>不</span><span class="c"><svg class="g" width="12" height="14"><use href="#g5236"/></svg>制</span><span class="c"><svg class="g" width="12" height="14"><use href="#g4f5c"/></svg>作</span><span class="c"><svg class="g" width="12" height="14"><use href="#g96f6"/></svg>零</span><span class="c"><svg class="g" width="12" height="14"><use href="#g4ef6"/></svg>件</span><span class="c"><svg class="g" width="12" height="14"><use href="#g3002"/></svg>。</span><span class="c"><svg class="g" width="12" height="14"><use href="#gff08"/></svg>（</span><span class="c"><svg class="g" width="12" height="14"><use href="#g578b"/></svg>型</span><span class="c"><svg class="g" width="12" height="14"><use href="#g6750"/></svg>材</span><span class="c"><svg class="g" width="12" height="14"><use href="#g9700"/></svg>需</span><span class="c"><svg class="g" width="12" height="14"><use href="#g8981"/></svg>要</span><span class="c"><svg class="g" width="12" height="14"><use href="#g5207"/></svg>切</span><span class="c"><svg class="g" width="12" height="14"><use href="#g5272"/></svg>割</span><span class="c"><svg class="g" width="12" height="14"><use href="#g7684"/></svg>的</span><span class="c"><svg class="g" width="12" height="14"><use href="#g8bf7"/></svg>请</span><span class="c"><svg class="g" width="12" height="14"><use href="#g9009"/></svg>选</span><span class="c"><svg class="g" width="12" height="14"><use href="#g6b64"/></svg>此</span><span class="c"><svg class="g" width="12" height="14"><use href="#g9879"/></svg>项</span><span class="c"><svg class="g" width="12" height="14"><use href="#gff09"/></svg>）</span></div><div class="t" style="left:464px;top:570px"><span class="c"><svg class="g" width="12" height="14"><use href="#g4e2d"/></svg>中</span><span class="c"><svg class="g" width="12" height="14"><use href="#g5fc3"/></svg>心</span><span class="c"><svg class="g" width="12" height="14"><use href="#g7ebf"/></svg>线</span><span class="c"><svg class="g" width="12" height="14"><use href="#g957f"/></svg>长</span><span class="c"><svg class="g" width="12" height="14"><use href="#g4f5c"/></svg>作</span><span class="c"><svg class="g" width="12" height="14"><use href="#g4e3a"/></svg>为</span><span class="c"><svg class="g" width="12" height="14"><use href="#g957f"/></svg>长</span><span class="c"><svg class="g" width="12" height="14"><use href="#g5ea6"/></svg>度</span><span class="a" style="width:6px"><span class="s">(</span></span><span class="c"><svg class="g" width="12" height="14"><use href="#g5982"/></svg>如</span><span class="c"><svg class="g" width="12" height="14"><use href="#g4e0d"/></svg>不</span><span class="c"><svg class="g" width="12" height="14"><use href="#g9009"/></svg>选</span><span class="c"><svg class="g" width="12" height="14"><use href="#g9ed8"/></svg>默</span><span class="c"><svg class="g" width="12" height="14"><use href="#g8ba4"/></svg>认</span><span class="c"><svg class="g" width="12" height="14"><use href="#g5916"/></svg>外</span><span class="c"><svg class="g" width="12" height="14"><use href="#g5f62"/></svg>形</span><span class="c"><svg class="g" width="12" height="14"><use href="#g957f"/></svg>长</span><span class="c"><svg class="g" width="12" height="14"><use href="#g4f5c"/></svg>作</span><span class="c"><svg class="g" width="12" height="14"><use href="#g4e3a"/></svg>为</span><span class="c"><svg class="g" width="12" height="14"><use href="#g957f"/></svg>长</span><span class="c"><svg class="g" width="12" height="14"><use href="#g5ea6"/></svg>度</span><span class="a" style="width:6px"><span class="s">)</span></span></div><div class="t" style="left:300px;top:605px"><span class="c"><svg class="g" width="12" height="14"><use href="#g786e"/></svg>确</span><span class="c"><svg class="g" width="12" height="14"><use href="#g5b9a"/></svg>定</span></div><div class="t" style="left:394px;top:605px"><span class="c"><svg class="g" width="12" height="14"><use href="#g53d6"/></svg>取</span><span class="c"><svg class="g" width="12" height="14"><use href="#g6d88"/></svg>消</span></div><div class="t" style="left:476px;top:605px"><span class="c"><svg class="g" width="12" height="14"><use href="#g5e2e"/></svg>帮</span><span class="c"><svg class="g" width="12" height="14"><use href="#g52a9"/></svg>助</span><span class="a" style="width:18px"><span class="s">(H)</span></span></div>
<div id="list"><div class="t" style="left:2px;top:0px"><span class="a" style="width:30px"><span class="s">*****</span></span><span class="c"><svg class="g" width="12" height="14"><use href="#g6807"/></svg>标</span><span class="c"><svg class="g" width="12" height="14"><use href="#g51c6"/></svg>准</span><span class="a" style="width:90px"><span class="s">YB3301_2005****</span></span></div><div class="t" style="left:2px;top:12px"><span class="a" style="width:114px"><span class="s">WH100x50x3.2x4.5&nbsp;WH</span></span></div><div class="t" style="left:2px;top:24px"><span class="a" style="width:90px"><span class="s">WH100x50x4x5&nbsp;WH</span></span></div><div class="t" style="left:2px;top:36px"><span class="a" style="width:90px"><span class="s">WH100x75x4x6&nbsp;WH</span></span></div><div class="t" style="left:2px;top:48px"><span class="a" style="width:96px"><span class="s">WH100x100x4x6&nbsp;WH</span></span></div><div class="t" style="left:2px;top:60px"><span class="a" style="width:96px"><span class="s">WH100x100x6x8&nbsp;WH</span></span></div><div class="t" style="left:2px;top:72px"><span class="a" style="width:90px"><span class="s">WH125x75x4x6&nbsp;WH</span></span></div><div class="t" style="left:2px;top:84px"><span class="a" style="width:96px"><span class="s">WH125x125x4x6&nbsp;WH</span></span></div><div class="t" style="left:2px;top:96px"><span class="a" style="width:114px"><span class="s">WH150x75x3.2x4.5&nbsp;WH</span></span></div><div class="t" style="left:2px;top:108px"><span class="a" style="width:90px"><span class="s">WH150x75x4x6&nbsp;WH</span></span></div><div class="t" style="left:2px;top:120px"><span class="a" style="width:90px"><span class="s">WH150x75x5x8&nbsp;WH</span></span></div><div class="t" style="left:2px;top:132px"><span class="a" style="width:120px"><span class="s">WH150x100x3.2x4.5&nbsp;WH</span></span></div><div class="t" style="left:2px;top:144px"><span class="a" style="width:96px"><span class="s">WH150x100x4x6&nbsp;WH</span></span></div><div class="t" style="left:2px;top:156px"><span class="a" style="width:96px"><span class="s">WH150x100x5x8&nbsp;WH</span></span></div><div class="t" style="left:2px;top:168px"><span class="a" style="width:96px"><span class="s">WH150x150x4x6&nbsp;WH</span></span></div><div class="t" style="left:2px;top:180px"><span class="a" style="width:96px"><span class="s">WH150x150x5x8&nbsp;WH</span></span></div><div class="t" style="left:2px;top:192px"><span class="a" style="width:96px"><span class="s">WH150x150x6x8&nbsp;WH</span></span></div><div class="t" style="left:2px;top:204px"><span class="a" style="width:120px"><span class="s">WH200x100x3.2x4.5&nbsp;WH</span></span></div><div class="t" style="left:2px;top:216px"><span class="a" style="width:96px"><span class="s">WH200x100x4x6&nbsp;WH</span></span></div><div class="t" style="left:2px;top:228px"><span class="a" style="width:96px"><span class="s">WH200x100x5x8&nbsp;WH</span></span></div><div class="t" style="left:2px;top:240px"><span class="a" style="width:96px"><span class="s">WH200x150x4x6&nbsp;WH</span></span></div><div class="t" style="left:2px;top:252px"><span class="a" style="width:96px"><span class="s">WH200x150x5x8&nbsp;WH</span></span></div></div>
</body></html>
